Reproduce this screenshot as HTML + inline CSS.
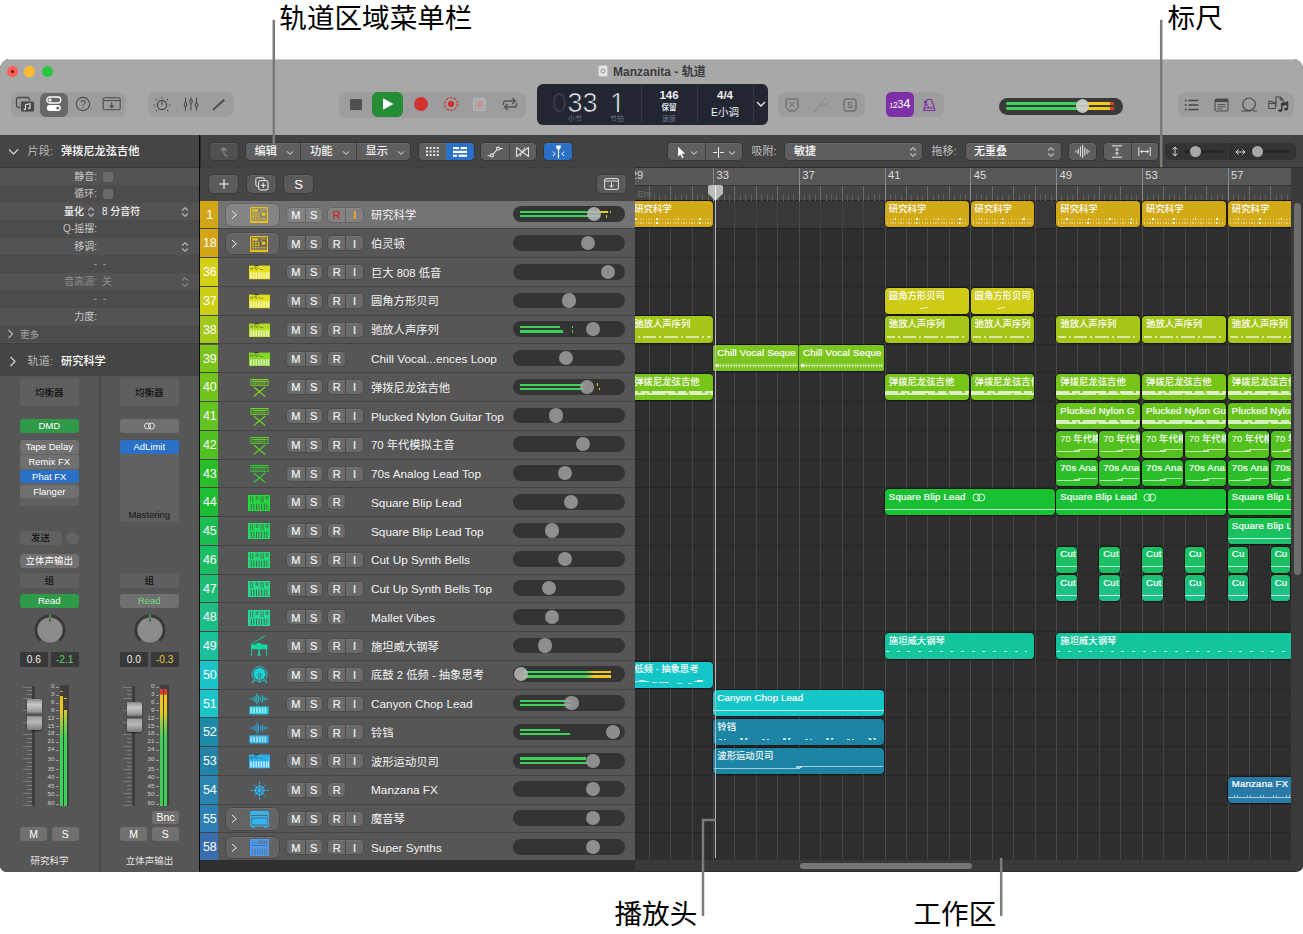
<!DOCTYPE html><html lang="zh-CN"><head><meta charset="utf-8"><title>Manzanita - 轨道</title><style>
*{box-sizing:border-box;margin:0;padding:0}
html,body{width:1303px;height:934px;background:#fff;overflow:hidden}
body{position:relative;font-family:"Liberation Sans","Noto Sans CJK SC",sans-serif;color:#fff;-webkit-font-smoothing:antialiased}
.abs,.abs *{position:absolute}
div,span,svg{position:absolute}
.callout{color:#000;font-size:27.6px;line-height:32px;z-index:60;white-space:nowrap;font-family:"Liberation Sans","Noto Sans CJK SC",sans-serif;font-weight:400}
.cl{background:#7a7a7a;z-index:60}
#win{left:0;top:59px;width:1303px;height:812.5px;border-radius:10px 10px 7px 7px;overflow:hidden;background:#2c2c2c}
#tb{left:0;top:0;width:1303px;height:76px;background:#a8a8a8}
.tl{width:11px;height:11px;border-radius:50%;top:7px}
.grp{background:#9d9d9d;border-radius:7.5px;height:25.8px;top:32.5px}
.t{white-space:nowrap;line-height:1}
.btn{background:#6a6a6a;border-radius:4px;box-shadow:0 0.5px 0 rgba(255,255,255,.12) inset,0 0 0 0.5px rgba(0,0,0,.25)}
.ms{font-size:11px;color:#f4f4f4;text-align:center;line-height:14px;height:14px;top:0;font-weight:400;-webkit-text-stroke:.2px}
.row{left:201px;width:434px;height:28.76px}
.num{left:-0.7px;top:0;width:17.7px;padding-left:1px;height:100%;font-size:12.5px;letter-spacing:-0.2px;text-align:center;color:#fff}
.nm{left:170px;font-size:12px;color:#f4f4f4;white-space:nowrap}
.sl{left:312px;top:5.6px;width:112.2px;height:15.8px;border-radius:8px;background:#343434}
.kn{width:14.2px;height:14.2px;border-radius:50%;background:#8e8e8e;top:0.8px}
.reg{border-radius:4px;overflow:hidden;box-shadow:0 0 0 0.8px rgba(0,0,0,.62)}
.reg .rt{left:4px;top:0.8px;font-size:9.6px;color:#fff;white-space:nowrap;line-height:13px;font-weight:500;letter-spacing:.2px;-webkit-text-stroke:.22px #fff}
.il{font-size:10px;color:#c8c8c8;white-space:nowrap;text-align:right;width:110px;left:0}
</style></head><body>
<svg style="left:0;top:0;z-index:60" width="1303" height="934" viewBox="0 0 1303 934"><g fill="none" stroke="#7b7b7b" stroke-width="2.5"><path d="M273.8 19.800V144"/><path d="M1161.200 19.800V167.300"/><path d="M703 916V820h12.800"/><path d="M1001.200 858V916"/></g></svg>
<div class="callout" style="left:279.3px;top:3px">轨道区域菜单栏</div>
<div class="callout" style="left:1167.6px;top:3px">标尺</div>
<div class="callout" style="left:614.5px;top:899px">播放头</div>
<div class="callout" style="left:913.5px;top:899px">工作区</div>
<div style="left:8px;top:59px;width:1287px;height:1px;background:#cdcdcd;z-index:55"></div>
<div id="win">
<div id="tb">
<div class="tl" style="left:7px;background:#fe5f57"></div><div style="left:11px;top:11px;width:3px;height:3px;border-radius:50%;background:#6b0b07"></div>
<div class="tl" style="left:24px;background:#febc2e"></div>
<div class="tl" style="left:41.5px;background:#28c840"></div>
<div class="t" style="left:613px;top:6.5px;font-size:12px;font-weight:700;color:#3c3c3c">Manzanita - 轨道</div>
<svg style="left:598px;top:6px" width="10" height="12" viewBox="0 0 10 12"><rect x="0.5" y="0.5" width="9" height="11" rx="1.5" fill="#e4e4e4" stroke="#bdbdbd" stroke-width="0.6"/><circle cx="5" cy="6" r="2" fill="none" stroke="#777" stroke-width="0.8"/></svg>
<div class="grp" style="left:11px;width:115px"></div>
<div style="left:40px;top:33.5px;width:28px;height:24px;border-radius:6px;background:#686868"></div>
<svg style="left:15px;top:36.500px" width="22" height="20" viewBox="0 0 22 20"><rect x="1.5" y="1.5" width="13" height="10" rx="2" fill="none" stroke="#4a4a4a" stroke-width="1.3"/><rect x="5.5" y="5" width="14" height="11" rx="2" fill="#4a4a4a" stroke="#a0a0a0" stroke-width="0.8"/><path d="M10.5 13.2v-4.6l4.5-1v4.4" fill="none" stroke="#d8d8d8" stroke-width="1.1"/><ellipse cx="9.7" cy="13.3" rx="1.2" ry="0.9" fill="#d8d8d8"/><ellipse cx="14.2" cy="12.2" rx="1.2" ry="0.9" fill="#d8d8d8"/></svg>
<svg style="left:45px;top:36px" width="18" height="18" viewBox="0 0 18 18"><rect x="1.8" y="2" width="14" height="6" rx="3" fill="none" stroke="#fff" stroke-width="1.3"/><circle cx="5" cy="5" r="1.6" fill="#fff"/><rect x="1.8" y="10" width="14" height="6" rx="3" fill="#fff"/><circle cx="12.8" cy="13" r="1.6" fill="#686868"/></svg>
<svg style="left:75px;top:37px" width="16" height="16" viewBox="0 0 16 16"><circle cx="8" cy="8" r="6.6" fill="none" stroke="#4a4a4a" stroke-width="1.1"/><text x="8" y="11.6" font-size="10" text-anchor="middle" fill="#4a4a4a" font-family="Liberation Sans,sans-serif">?</text></svg>
<svg style="left:102px;top:37px" width="20" height="16" viewBox="0 0 20 16"><rect x="1.2" y="1.8" width="17" height="12" rx="1.8" fill="none" stroke="#4a4a4a" stroke-width="1.1"/><path d="M1.5 4.6h16.5" stroke="#4a4a4a" stroke-width="1"/><path d="M9.7 6.5v5M7.4 9.4l2.3 2.3 2.3-2.3" fill="none" stroke="#4a4a4a" stroke-width="1.1"/></svg>
<div class="grp" style="left:148px;width:86px"></div>
<svg style="left:152px;top:36px" width="20" height="19" viewBox="0 0 20 19"><circle cx="10" cy="10" r="4.6" fill="none" stroke="#4a4a4a" stroke-width="1.2"/><path d="M10 6.5v3.7" stroke="#4a4a4a" stroke-width="1.2"/><g stroke="#4a4a4a" stroke-width="1.2" stroke-linecap="round"><path d="M10 2v0.6M4.3 4.3l.4.4M15.7 4.3l-.4.4M2 10h.6M17.4 10h.6M4.3 15.7l.4-.4M15.7 15.7l-.4-.4"/></g></svg>
<svg style="left:182px;top:37px" width="18" height="16" viewBox="0 0 18 16"><g stroke="#4a4a4a" stroke-width="1.1" fill="none"><path d="M3.5 1.5v5M3.5 10v4.5M9 1.5v2M9 7.5v7M14.5 1.5v6M14.5 11v3.5"/><rect x="2.3" y="6.5" width="2.4" height="3.6" rx="1.2"/><rect x="7.8" y="3.6" width="2.4" height="3.6" rx="1.2"/><rect x="13.3" y="7.4" width="2.4" height="3.6" rx="1.2"/></g></svg>
<svg style="left:211px;top:38px" width="16" height="14" viewBox="0 0 16 14"><path d="M1.5 12.5L12.5 2.2l1.3 1.4L2.8 13z" fill="#4a4a4a" stroke="#4a4a4a" stroke-width="0.6"/></svg>
<div class="grp" style="left:339px;width:187px;top:32.5px;height:26px"></div>
<div style="left:350px;top:39.5px;width:11.5px;height:11.5px;border-radius:1.5px;background:#505050"></div>
<div style="left:372px;top:32.5px;width:31px;height:25px;border-radius:6px;background:#238c34"></div>
<svg style="left:381px;top:38px" width="14" height="14" viewBox="0 0 14 14"><path d="M2 1.2v11.6l10.5-5.8z" fill="#fff"/></svg>
<div style="left:413.5px;top:38px;width:14px;height:14px;border-radius:50%;background:#d13232"></div>
<svg style="left:443px;top:37px" width="16" height="16" viewBox="0 0 16 16"><circle cx="8" cy="8" r="6.4" fill="none" stroke="#d62a2a" stroke-width="1.1" stroke-dasharray="2.6 1.4"/><circle cx="8" cy="8" r="3" fill="#d62a2a"/></svg>
<div style="left:473px;top:39px;width:13px;height:13px;border-radius:2px;border:1px solid #b9b9b9;background:#ababab"></div><div style="left:477px;top:43px;width:5px;height:5px;border-radius:50%;background:#d98585"></div>
<svg style="left:501px;top:37px" width="18" height="16" viewBox="0 0 18 16"><g fill="none" stroke="#555" stroke-width="1.5" stroke-linecap="round" stroke-linejoin="round"><path d="M2.5 8.5V7a2 2 0 0 1 2-2h9.5M11.8 2.5l2.6 2.5-2.6 2.5"/><path d="M15.5 7.5V9a2 2 0 0 1-2 2H4M6.2 8.5L3.6 11l2.6 2.5"/></g></svg>
<div style="left:537px;top:25px;width:231px;height:41px;border-radius:6px;background:#222631"></div>
<div style="left:641px;top:26px;width:1px;height:38px;background:#323746"></div><div style="left:697px;top:26px;width:1px;height:38px;background:#323746"></div><div style="left:753px;top:26px;width:1px;height:38px;background:#323746"></div>
<div class="t" style="left:552px;top:30.5px;font-size:27px;-webkit-text-stroke:0.7px #222631;color:#3c4252">0</div>
<div class="t" style="left:567.5px;top:30.5px;font-size:27px;-webkit-text-stroke:0.7px #222631;color:#eef0f6">33</div>
<div class="t" style="left:610px;top:30.5px;font-size:27px;-webkit-text-stroke:0.7px #222631;color:#eef0f6">1</div>
<div style="left:610.5px;top:50.6px;width:6.5px;height:2.8px;background:#222631"></div><div style="left:619px;top:50.6px;width:6.5px;height:2.8px;background:#222631"></div>
<div class="t" style="left:568px;top:56px;font-size:7px;color:#6a7289">小节</div>
<div class="t" style="left:610px;top:56px;font-size:7px;color:#6a7289">节拍</div>
<div class="t" style="left:641px;width:56px;text-align:center;top:31px;font-size:11.5px;color:#eef0f5;font-weight:700">146</div>
<div class="t" style="left:641px;width:56px;text-align:center;top:45px;font-size:7.5px;color:#dfe2ea;font-weight:700">保留</div>
<div class="t" style="left:641px;width:56px;text-align:center;top:56px;font-size:7px;color:#6a7289">速度</div>
<div class="t" style="left:697px;width:56px;text-align:center;top:31px;font-size:11.5px;color:#eef0f5;font-weight:700">4/4</div>
<div class="t" style="left:697px;width:56px;text-align:center;top:48px;font-size:10.5px;color:#eef0f5">E小调</div>
<svg style="left:755px;top:41px" width="12" height="8" viewBox="0 0 12 8"><path d="M2 2l4 4 4-4" fill="none" stroke="#e8e8e8" stroke-width="1.4"/></svg>
<div class="grp" style="left:778px;width:87px"></div>
<svg style="left:785.300px;top:38.800px" width="14" height="14" viewBox="0 0 14 14"><path d="M2.2 1h9.6a1.2 1.2 0 0 1 1.2 1.2v7.3L9.8 13H4.2L1 9.5V2.2A1.2 1.2 0 0 1 2.2 1z" fill="none" stroke="#5a5a5a" stroke-width="1"/><path d="M4.7 4.2l4.6 4.6M9.3 4.2L4.7 8.8" stroke="#5a5a5a" stroke-width="1"/></svg>
<svg style="left:813px;top:37.500px" width="16" height="16" viewBox="0 0 16 16"><path d="M1.800 14.500L12.300 1M6.800 8c1.800 1.800 5 .8 7.500-2.200" fill="none" stroke="#8c8c8c" stroke-width="1.100" stroke-linecap="round"/><circle cx="1.800" cy="14.500" r=".9" fill="#8c8c8c"/></svg>
<svg style="left:842.700px;top:38.700px" width="14" height="14" viewBox="0 0 14 14"><rect x="1" y="1" width="12" height="12" rx="2" fill="none" stroke="#5a5a5a" stroke-width="1"/><text x="7" y="10.200" font-size="8.500" text-anchor="middle" fill="#5a5a5a" font-family="Liberation Sans,sans-serif">S</text></svg>
<div class="grp" style="left:886px;width:58px"></div>
<div style="left:886px;top:32.5px;width:28px;height:25.800px;border-radius:5.5px;background:#7f2fa8"></div>
<div class="t" style="left:889.5px;top:43.500px;font-size:6.500px;color:#fff">1</div><div class="t" style="left:893px;top:42px;font-size:8.500px;color:#fff">2</div><div class="t" style="left:897.500px;top:40.300px;font-size:10.500px;color:#fff">3</div><div class="t" style="left:903.300px;top:38.300px;font-size:13px;color:#fff">4</div>
<svg style="left:921.300px;top:37.800px" width="17" height="16" viewBox="0 0 17 16"><path d="M6 2.5h4.5L14 13.500H2.500z" fill="none" stroke="#7f2fa8" stroke-width="1.2" stroke-linejoin="round"/><path d="M3.200 11h10" stroke="#7f2fa8" stroke-width="1.1"/><path d="M8.200 11L3 3.800" stroke="#7f2fa8" stroke-width="1.1"/><circle cx="4.200" cy="5.300" r="1.300" fill="#7f2fa8"/></svg>
<div style="left:998.5px;top:38.6px;width:124px;height:17.2px;border-radius:8.6px;background:#393939"></div>
<div style="left:1006px;top:43.2px;width:76px;height:2.8px;border-radius:1.4px 0 0 1.4px;background:#3fd35c"></div><div style="left:1006px;top:48.4px;width:76px;height:2.8px;border-radius:1.4px 0 0 1.4px;background:#3fd35c"></div>
<div style="left:1082px;top:43.2px;width:28px;height:2.8px;background:#f5cc14"></div><div style="left:1082px;top:48.4px;width:28px;height:2.8px;background:#f5cc14"></div>
<div style="left:1110px;top:43.2px;width:3.6px;height:2.8px;background:#e0402b"></div><div style="left:1110px;top:48.4px;width:3.6px;height:2.8px;background:#e0402b"></div>
<div style="left:1075.8px;top:40.4px;width:13.4px;height:13.4px;border-radius:50%;background:rgba(205,205,205,.93);box-shadow:0 0 1px rgba(0,0,0,.4)"></div>
<div class="grp" style="left:1178px;width:116px"></div>
<svg style="left:1184px;top:38.7px" width="16" height="14" viewBox="0 0 16 14"><g stroke="#4a4a4a" stroke-width="1.300"><path d="M4.500 2.500h10M4.500 7h10M4.500 11.500h10"/></g><g fill="#4a4a4a"><circle cx="1.700" cy="2.500" r="1"/><circle cx="1.700" cy="7" r="1"/><circle cx="1.700" cy="11.500" r="1"/></g></svg>
<svg style="left:1214px;top:38.7px" width="15" height="14" viewBox="0 0 15 14"><rect x="1" y="1" width="13" height="12" rx="1.800" fill="none" stroke="#4a4a4a" stroke-width="1.100"/><rect x="1" y="1" width="13" height="3" fill="#4a4a4a"/><path d="M3.500 6.500h8M3.500 8.700h8M3.500 10.900h5" stroke="#4a4a4a" stroke-width="0.900"/></svg>
<svg style="left:1240px;top:37.5px" width="18" height="17" viewBox="0 0 18 17"><circle cx="9" cy="7.300" r="6.300" fill="none" stroke="#4a4a4a" stroke-width="1.200"/><path d="M1.500 14h9.500M12.800 14h4" fill="none" stroke="#4a4a4a" stroke-width="1.100"/></svg>
<svg style="left:1267px;top:36px" width="24" height="20" viewBox="0 0 24 20"><g fill="none" stroke="#4a4a4a" stroke-width="1.1" stroke-linejoin="round"><path d="M1.800 6.200h2.600l.8 1h3.200v6.300H1.800z"/><path d="M1.800 8.500h6.600"/><path d="M9 11V2h4.200l3 3v2.500"/><path d="M13.200 2v3h3"/></g><path d="M14.700 15.500v-6.800l5.800-1.400v6.800" fill="none" stroke="#3a3a3a" stroke-width="1.500"/><path d="M14.700 10.200l5.800-1.400" stroke="#3a3a3a" stroke-width="1.800"/><ellipse cx="13.200" cy="15.600" rx="1.900" ry="1.400" fill="#3a3a3a"/><ellipse cx="19" cy="14.200" rx="1.900" ry="1.400" fill="#3a3a3a"/></svg>
</div><div id="insp" style="left:0;top:76px;width:199px;height:736.5px;background:#565656">
<div style="left:0;top:0;width:199px;height:32.700px;background:#454545;border-bottom:1px solid #383838"></div>
<svg style="left:8px;top:12.800px" width="11" height="8" viewBox="0 0 11 8"><path d="M1 1.500l4.500 4.500L10 1.500" fill="none" stroke="#d0d0d0" stroke-width="1.300"/></svg>
<div class="t" style="left:27.500px;top:11.300px;font-size:11.200px;color:#b8b8b8">片段:</div>
<div class="t" style="left:61px;top:11.300px;font-size:11.200px;color:#fff;font-weight:500">弹拨尼龙弦吉他</div>
<div style="left:0;top:33.00px;width:199px;height:17.45px;background:#535353"></div>
<div style="left:0;top:50.45px;width:199px;height:17.45px;background:#4c4c4c"></div>
<div style="left:0;top:67.90px;width:199px;height:17.45px;background:#535353"></div>
<div style="left:0;top:85.35px;width:199px;height:17.45px;background:#4c4c4c"></div>
<div style="left:0;top:102.80px;width:199px;height:17.45px;background:#535353"></div>
<div style="left:0;top:120.25px;width:199px;height:17.45px;background:#4c4c4c"></div>
<div style="left:0;top:137.70px;width:199px;height:17.45px;background:#535353"></div>
<div style="left:0;top:155.15px;width:199px;height:17.45px;background:#4c4c4c"></div>
<div style="left:0;top:172.60px;width:199px;height:17.45px;background:#535353"></div>
<div style="left:0;top:190.05px;width:199px;height:17.45px;background:#4c4c4c"></div>
<div class="t" style="left:0;width:97px;text-align:right;top:37.00px;font-size:10px;color:#c6c6c6;">静音:</div>
<div class="t" style="left:0;width:97px;text-align:right;top:54.45px;font-size:10px;color:#c6c6c6;">循环:</div>
<div class="t" style="left:64px;top:71.90px;font-size:10px;color:#f0f0f0;font-weight:500">量化</div>
<div class="t" style="left:0;width:97px;text-align:right;top:89.35px;font-size:10px;color:#c6c6c6;">Q-摇摆:</div>
<div class="t" style="left:0;width:97px;text-align:right;top:106.80px;font-size:10px;color:#c6c6c6;">移调:</div>
<div class="t" style="left:0;width:106px;text-align:right;top:124.25px;font-size:10px;color:#a4a4a4;">-&nbsp; -</div>
<div class="t" style="left:0;width:97px;text-align:right;top:141.70px;font-size:10px;color:#8e8e8e;">音高源:</div>
<div class="t" style="left:0;width:106px;text-align:right;top:159.15px;font-size:10px;color:#a4a4a4;">-&nbsp; -</div>
<div class="t" style="left:0;width:97px;text-align:right;top:176.60px;font-size:10px;color:#c6c6c6;">力度:</div>
<div class="t" style="left:102px;top:71.90px;font-size:10px;color:#f0f0f0;font-weight:500">8 分音符</div>
<div class="t" style="left:102px;top:141.70px;font-size:10px;color:#8e8e8e">关</div>
<div style="left:103px;top:36.50px;width:10px;height:10px;border-radius:2px;background:#6b6b6b"></div>
<div style="left:103px;top:53.95px;width:10px;height:10px;border-radius:2px;background:#6b6b6b"></div>
<svg style="left:87.0px;top:70.9px" width="8" height="12" viewBox="0 0 8 12"><path d="M1.200 4.500L4 1.700l2.800 2.800M1.200 7.500L4 10.300l2.800-2.800" fill="none" stroke="#c0c0c0" stroke-width="1.100"/></svg>
<svg style="left:181.0px;top:70.9px" width="8" height="12" viewBox="0 0 8 12"><path d="M1.200 4.500L4 1.700l2.800 2.800M1.200 7.500L4 10.300l2.800-2.800" fill="none" stroke="#c0c0c0" stroke-width="1.100"/></svg>
<svg style="left:181.0px;top:105.8px" width="8" height="12" viewBox="0 0 8 12"><path d="M1.200 4.500L4 1.700l2.800 2.800M1.200 7.500L4 10.300l2.800-2.800" fill="none" stroke="#c0c0c0" stroke-width="1.100"/></svg>
<svg style="left:181.0px;top:140.7px" width="8" height="12" viewBox="0 0 8 12"><path d="M1.200 4.500L4 1.700l2.800 2.800M1.200 7.500L4 10.300l2.800-2.800" fill="none" stroke="#8a8a8a" stroke-width="1.100"/></svg>
<svg style="left:7px;top:194.0px" width="7" height="10" viewBox="0 0 7 10"><path d="M1.500 1l4 4-4 4" fill="none" stroke="#b8b8b8" stroke-width="1.100"/></svg>
<div class="t" style="left:20px;top:194.55px;font-size:9.5px;color:#a8a8a8">更多</div>
<div style="left:0;top:207.500px;width:199px;height:34px;background:#454545;border-top:1px solid #3c3c3c;border-bottom:1px solid #333"></div>
<svg style="left:9px;top:220.500px" width="8" height="11" viewBox="0 0 8 11"><path d="M1.500 1l4.500 4.500L1.500 10" fill="none" stroke="#d0d0d0" stroke-width="1.300"/></svg>
<div class="t" style="left:27.500px;top:221px;font-size:11.200px;color:#b8b8b8">轨道:</div>
<div class="t" style="left:61px;top:221px;font-size:11.200px;color:#fff;font-weight:500">研究科学</div>
<div style="left:0;top:241px;width:199px;height:495px;background:#565656"></div>
<div style="left:99px;top:241px;width:1.500px;height:495px;background:#484848"></div>
<div style="left:19.5px;top:244.0px;width:59.5px;height:27.0px;background:#5f5f5f;border-radius:3px;font-size:9.5px;color:#121212;text-align:center;line-height:27.0px;white-space:nowrap;border-radius:1px;font-weight:500;">均衡器</div>
<div style="left:19.5px;top:438.0px;width:59.5px;height:15.0px;background:#5f5f5f;border-radius:3px;font-size:9.5px;color:#121212;text-align:center;line-height:15.0px;white-space:nowrap;border-radius:1px;font-weight:500;">组</div>
<div style="left:119.5px;top:244.0px;width:59.5px;height:27.0px;background:#5f5f5f;border-radius:3px;font-size:9.5px;color:#121212;text-align:center;line-height:27.0px;white-space:nowrap;border-radius:1px;font-weight:500;">均衡器</div>
<div style="left:119.5px;top:438.0px;width:59.5px;height:15.0px;background:#5f5f5f;border-radius:3px;font-size:9.5px;color:#121212;text-align:center;line-height:15.0px;white-space:nowrap;border-radius:1px;font-weight:500;">组</div>
<div style="left:19.5px;top:283.5px;width:59.5px;height:14.0px;background:#2e9a47;border-radius:3px;font-size:9.5px;color:#fff;text-align:center;line-height:14.0px;white-space:nowrap;">DMD</div>
<div style="left:119.5px;top:283.5px;width:59.5px;height:14.0px;background:#707070;border-radius:3px;font-size:9.5px;color:#fff;text-align:center;line-height:14.0px;white-space:nowrap;"></div>
<svg style="left:143px;top:286.5px" width="13" height="8" viewBox="0 0 13 8"><circle cx="4.500" cy="4" r="3" fill="none" stroke="#f0f0f0" stroke-width="0.900"/><circle cx="8.500" cy="4" r="3" fill="none" stroke="#f0f0f0" stroke-width="0.900"/></svg>
<div style="left:19.500px;top:305.0px;width:59.500px;height:66px;background:#616161;border-radius:3px"></div>
<div style="left:119.500px;top:305.0px;width:59.500px;height:82px;background:#616161;border-radius:3px"></div>
<div style="left:19.5px;top:305.3px;width:59.5px;height:13.6px;background:#707070;border-radius:3px;font-size:9.5px;color:#fff;text-align:center;line-height:13.6px;white-space:nowrap;">Tape Delay</div>
<div style="left:19.5px;top:320.0px;width:59.5px;height:13.6px;background:#707070;border-radius:3px;font-size:9.5px;color:#fff;text-align:center;line-height:13.6px;white-space:nowrap;">Remix FX</div>
<div style="left:19.5px;top:334.8px;width:59.5px;height:13.6px;background:#2a70c6;border-radius:3px;font-size:9.5px;color:#fff;text-align:center;line-height:13.6px;white-space:nowrap;">Phat FX</div>
<div style="left:19.5px;top:349.6px;width:59.5px;height:13.6px;background:#707070;border-radius:3px;font-size:9.5px;color:#fff;text-align:center;line-height:13.6px;white-space:nowrap;">Flanger</div>
<div style="left:119.5px;top:305.3px;width:59.5px;height:13.6px;background:#2a70c6;border-radius:3px;font-size:9.5px;color:#fff;text-align:center;line-height:13.6px;white-space:nowrap;">AdLimit</div>
<div class="t" style="left:119.500px;width:59.500px;text-align:center;top:375.0px;font-size:9.500px;color:#161616">Mastering</div>
<div style="left:19.5px;top:396.0px;width:42.0px;height:14.0px;background:#616161;border-radius:3px;font-size:9.5px;color:#121212;text-align:center;line-height:14.0px;white-space:nowrap;font-weight:500;">发送</div>
<div style="left:65.500px;top:396.5px;width:13px;height:13px;border-radius:50%;background:#636363"></div>
<div style="left:19.5px;top:418.7px;width:59.5px;height:14.0px;background:#707070;border-radius:3px;font-size:9.5px;color:#fff;text-align:center;line-height:14.0px;white-space:nowrap;">立体声输出</div>
<div style="left:19.5px;top:458.6px;width:59.5px;height:14.0px;background:#2e9a47;border-radius:3px;font-size:9.5px;color:#fff;text-align:center;line-height:14.0px;white-space:nowrap;">Read</div>
<div style="left:119.5px;top:458.6px;width:59.5px;height:14.0px;background:#707070;border-radius:3px;font-size:9.5px;color:#6fdc7f;text-align:center;line-height:14.0px;white-space:nowrap;">Read</div>
<svg style="left:32.5px;top:478.0px" width="34" height="34" viewBox="-17 -17 34 34"><path d="M-10.300 11.400A15.400 15.400 0 1 1 10.300 11.400L8.300 9.200A12.400 12.400 0 1 0 -8.300 9.200z" fill="#373737"/><circle r="12.600" fill="#8c8c8c"/><path d="M0-15.500v3.500" stroke="#3fc84f" stroke-width="1.200"/><path d="M0-11.500v3" stroke="#2a2a2a" stroke-width="1"/></svg>
<svg style="left:132.5px;top:478.0px" width="34" height="34" viewBox="-17 -17 34 34"><path d="M-10.300 11.400A15.400 15.400 0 1 1 10.300 11.400L8.300 9.200A12.400 12.400 0 1 0 -8.300 9.200z" fill="#373737"/><circle r="12.600" fill="#8c8c8c"/><path d="M0-15.500v3.500" stroke="#3fc84f" stroke-width="1.200"/><path d="M0-11.500v3" stroke="#2a2a2a" stroke-width="1"/></svg>
<div style="left:19.5px;top:517.2px;width:28.500px;height:15.200px;background:#383838;border-radius:1px;font-size:10.200px;color:#f0f0f0;text-align:center;line-height:15.500px">0.6</div>
<div style="left:50.5px;top:517.2px;width:28.500px;height:15.200px;background:#383838;border-radius:1px;font-size:10.200px;color:#5fd068;text-align:center;line-height:15.500px">-2.1</div>
<div style="left:119.5px;top:517.2px;width:28.500px;height:15.200px;background:#383838;border-radius:1px;font-size:10.200px;color:#f0f0f0;text-align:center;line-height:15.500px">0.0</div>
<div style="left:150.5px;top:517.2px;width:28.500px;height:15.200px;background:#383838;border-radius:1px;font-size:10.200px;color:#e8c43a;text-align:center;line-height:15.500px">-0.3</div>
<div style="left:32.0px;top:551.0px;width:3px;height:119.500px;background:#3c3c3c;border-radius:1px"></div>
<div style="left:23.0px;top:551.50px;width:9px;height:0.800px;background:#7c7c7c"></div>
<div style="left:27.0px;top:555.45px;width:5px;height:0.800px;background:#7c7c7c"></div>
<div style="left:27.0px;top:559.40px;width:5px;height:0.800px;background:#7c7c7c"></div>
<div style="left:23.0px;top:563.35px;width:9px;height:0.800px;background:#7c7c7c"></div>
<div style="left:27.0px;top:567.30px;width:5px;height:0.800px;background:#7c7c7c"></div>
<div style="left:27.0px;top:571.25px;width:5px;height:0.800px;background:#7c7c7c"></div>
<div style="left:23.0px;top:575.20px;width:9px;height:0.800px;background:#7c7c7c"></div>
<div style="left:27.0px;top:579.15px;width:5px;height:0.800px;background:#7c7c7c"></div>
<div style="left:27.0px;top:583.10px;width:5px;height:0.800px;background:#7c7c7c"></div>
<div style="left:23.0px;top:587.05px;width:9px;height:0.800px;background:#7c7c7c"></div>
<div style="left:27.0px;top:591.00px;width:5px;height:0.800px;background:#7c7c7c"></div>
<div style="left:27.0px;top:594.95px;width:5px;height:0.800px;background:#7c7c7c"></div>
<div style="left:23.0px;top:598.90px;width:9px;height:0.800px;background:#7c7c7c"></div>
<div style="left:27.0px;top:602.85px;width:5px;height:0.800px;background:#7c7c7c"></div>
<div style="left:27.0px;top:606.80px;width:5px;height:0.800px;background:#7c7c7c"></div>
<div style="left:23.0px;top:610.75px;width:9px;height:0.800px;background:#7c7c7c"></div>
<div style="left:27.0px;top:614.70px;width:5px;height:0.800px;background:#7c7c7c"></div>
<div style="left:27.0px;top:618.65px;width:5px;height:0.800px;background:#7c7c7c"></div>
<div style="left:23.0px;top:622.60px;width:9px;height:0.800px;background:#7c7c7c"></div>
<div style="left:27.0px;top:626.55px;width:5px;height:0.800px;background:#7c7c7c"></div>
<div style="left:27.0px;top:630.50px;width:5px;height:0.800px;background:#7c7c7c"></div>
<div style="left:23.0px;top:634.45px;width:9px;height:0.800px;background:#7c7c7c"></div>
<div style="left:27.0px;top:638.40px;width:5px;height:0.800px;background:#7c7c7c"></div>
<div style="left:27.0px;top:642.35px;width:5px;height:0.800px;background:#7c7c7c"></div>
<div style="left:23.0px;top:646.30px;width:9px;height:0.800px;background:#7c7c7c"></div>
<div style="left:27.0px;top:650.25px;width:5px;height:0.800px;background:#7c7c7c"></div>
<div style="left:27.0px;top:654.20px;width:5px;height:0.800px;background:#7c7c7c"></div>
<div style="left:23.0px;top:658.15px;width:9px;height:0.800px;background:#7c7c7c"></div>
<div style="left:27.0px;top:662.10px;width:5px;height:0.800px;background:#7c7c7c"></div>
<div style="left:27.0px;top:666.05px;width:5px;height:0.800px;background:#7c7c7c"></div>
<div style="left:23.0px;top:670.00px;width:9px;height:0.800px;background:#7c7c7c"></div>
<div class="t" style="left:40.5px;width:14px;text-align:right;top:548.4px;font-size:6.200px;color:#cfcfcf">0</div>
<div style="left:56.0px;top:551.5px;width:2.500px;height:0.700px;background:#9a9a9a"></div>
<div class="t" style="left:40.5px;width:14px;text-align:right;top:556.4px;font-size:6.200px;color:#cfcfcf">3</div>
<div style="left:56.0px;top:559.5px;width:2.500px;height:0.700px;background:#9a9a9a"></div>
<div class="t" style="left:40.5px;width:14px;text-align:right;top:564.4px;font-size:6.200px;color:#cfcfcf">6</div>
<div style="left:56.0px;top:567.5px;width:2.500px;height:0.700px;background:#9a9a9a"></div>
<div class="t" style="left:40.5px;width:14px;text-align:right;top:571.9px;font-size:6.200px;color:#cfcfcf">9</div>
<div style="left:56.0px;top:575.0px;width:2.500px;height:0.700px;background:#9a9a9a"></div>
<div class="t" style="left:40.5px;width:14px;text-align:right;top:579.9px;font-size:6.200px;color:#cfcfcf">12</div>
<div style="left:56.0px;top:583.0px;width:2.500px;height:0.700px;background:#9a9a9a"></div>
<div class="t" style="left:40.5px;width:14px;text-align:right;top:587.9px;font-size:6.200px;color:#cfcfcf">15</div>
<div style="left:56.0px;top:591.0px;width:2.500px;height:0.700px;background:#9a9a9a"></div>
<div class="t" style="left:40.5px;width:14px;text-align:right;top:595.4px;font-size:6.200px;color:#cfcfcf">18</div>
<div style="left:56.0px;top:598.5px;width:2.500px;height:0.700px;background:#9a9a9a"></div>
<div class="t" style="left:40.5px;width:14px;text-align:right;top:603.4px;font-size:6.200px;color:#cfcfcf">21</div>
<div style="left:56.0px;top:606.5px;width:2.500px;height:0.700px;background:#9a9a9a"></div>
<div class="t" style="left:40.5px;width:14px;text-align:right;top:611.4px;font-size:6.200px;color:#cfcfcf">24</div>
<div style="left:56.0px;top:614.5px;width:2.500px;height:0.700px;background:#9a9a9a"></div>
<div class="t" style="left:40.5px;width:14px;text-align:right;top:621.4px;font-size:6.200px;color:#cfcfcf">30</div>
<div style="left:56.0px;top:624.5px;width:2.500px;height:0.700px;background:#9a9a9a"></div>
<div class="t" style="left:40.5px;width:14px;text-align:right;top:630.9px;font-size:6.200px;color:#cfcfcf">35</div>
<div style="left:56.0px;top:634.0px;width:2.500px;height:0.700px;background:#9a9a9a"></div>
<div class="t" style="left:40.5px;width:14px;text-align:right;top:638.9px;font-size:6.200px;color:#cfcfcf">40</div>
<div style="left:56.0px;top:642.0px;width:2.500px;height:0.700px;background:#9a9a9a"></div>
<div class="t" style="left:40.5px;width:14px;text-align:right;top:647.9px;font-size:6.200px;color:#cfcfcf">45</div>
<div style="left:56.0px;top:651.0px;width:2.500px;height:0.700px;background:#9a9a9a"></div>
<div class="t" style="left:40.5px;width:14px;text-align:right;top:656.4px;font-size:6.200px;color:#cfcfcf">50</div>
<div style="left:56.0px;top:659.5px;width:2.500px;height:0.700px;background:#9a9a9a"></div>
<div class="t" style="left:40.5px;width:14px;text-align:right;top:665.4px;font-size:6.200px;color:#cfcfcf">60</div>
<div style="left:56.0px;top:668.5px;width:2.500px;height:0.700px;background:#9a9a9a"></div>
<div style="left:59.5px;top:550.0px;width:9.800px;height:121px;background:#3e3e3e;border-radius:1px"></div>
<div style="left:132.0px;top:551.0px;width:3px;height:119.500px;background:#3c3c3c;border-radius:1px"></div>
<div style="left:123.0px;top:551.50px;width:9px;height:0.800px;background:#7c7c7c"></div>
<div style="left:127.0px;top:555.45px;width:5px;height:0.800px;background:#7c7c7c"></div>
<div style="left:127.0px;top:559.40px;width:5px;height:0.800px;background:#7c7c7c"></div>
<div style="left:123.0px;top:563.35px;width:9px;height:0.800px;background:#7c7c7c"></div>
<div style="left:127.0px;top:567.30px;width:5px;height:0.800px;background:#7c7c7c"></div>
<div style="left:127.0px;top:571.25px;width:5px;height:0.800px;background:#7c7c7c"></div>
<div style="left:123.0px;top:575.20px;width:9px;height:0.800px;background:#7c7c7c"></div>
<div style="left:127.0px;top:579.15px;width:5px;height:0.800px;background:#7c7c7c"></div>
<div style="left:127.0px;top:583.10px;width:5px;height:0.800px;background:#7c7c7c"></div>
<div style="left:123.0px;top:587.05px;width:9px;height:0.800px;background:#7c7c7c"></div>
<div style="left:127.0px;top:591.00px;width:5px;height:0.800px;background:#7c7c7c"></div>
<div style="left:127.0px;top:594.95px;width:5px;height:0.800px;background:#7c7c7c"></div>
<div style="left:123.0px;top:598.90px;width:9px;height:0.800px;background:#7c7c7c"></div>
<div style="left:127.0px;top:602.85px;width:5px;height:0.800px;background:#7c7c7c"></div>
<div style="left:127.0px;top:606.80px;width:5px;height:0.800px;background:#7c7c7c"></div>
<div style="left:123.0px;top:610.75px;width:9px;height:0.800px;background:#7c7c7c"></div>
<div style="left:127.0px;top:614.70px;width:5px;height:0.800px;background:#7c7c7c"></div>
<div style="left:127.0px;top:618.65px;width:5px;height:0.800px;background:#7c7c7c"></div>
<div style="left:123.0px;top:622.60px;width:9px;height:0.800px;background:#7c7c7c"></div>
<div style="left:127.0px;top:626.55px;width:5px;height:0.800px;background:#7c7c7c"></div>
<div style="left:127.0px;top:630.50px;width:5px;height:0.800px;background:#7c7c7c"></div>
<div style="left:123.0px;top:634.45px;width:9px;height:0.800px;background:#7c7c7c"></div>
<div style="left:127.0px;top:638.40px;width:5px;height:0.800px;background:#7c7c7c"></div>
<div style="left:127.0px;top:642.35px;width:5px;height:0.800px;background:#7c7c7c"></div>
<div style="left:123.0px;top:646.30px;width:9px;height:0.800px;background:#7c7c7c"></div>
<div style="left:127.0px;top:650.25px;width:5px;height:0.800px;background:#7c7c7c"></div>
<div style="left:127.0px;top:654.20px;width:5px;height:0.800px;background:#7c7c7c"></div>
<div style="left:123.0px;top:658.15px;width:9px;height:0.800px;background:#7c7c7c"></div>
<div style="left:127.0px;top:662.10px;width:5px;height:0.800px;background:#7c7c7c"></div>
<div style="left:127.0px;top:666.05px;width:5px;height:0.800px;background:#7c7c7c"></div>
<div style="left:123.0px;top:670.00px;width:9px;height:0.800px;background:#7c7c7c"></div>
<div class="t" style="left:140.5px;width:14px;text-align:right;top:548.4px;font-size:6.200px;color:#cfcfcf">0</div>
<div style="left:156.0px;top:551.5px;width:2.500px;height:0.700px;background:#9a9a9a"></div>
<div class="t" style="left:140.5px;width:14px;text-align:right;top:556.4px;font-size:6.200px;color:#cfcfcf">3</div>
<div style="left:156.0px;top:559.5px;width:2.500px;height:0.700px;background:#9a9a9a"></div>
<div class="t" style="left:140.5px;width:14px;text-align:right;top:564.4px;font-size:6.200px;color:#cfcfcf">6</div>
<div style="left:156.0px;top:567.5px;width:2.500px;height:0.700px;background:#9a9a9a"></div>
<div class="t" style="left:140.5px;width:14px;text-align:right;top:571.9px;font-size:6.200px;color:#cfcfcf">9</div>
<div style="left:156.0px;top:575.0px;width:2.500px;height:0.700px;background:#9a9a9a"></div>
<div class="t" style="left:140.5px;width:14px;text-align:right;top:579.9px;font-size:6.200px;color:#cfcfcf">12</div>
<div style="left:156.0px;top:583.0px;width:2.500px;height:0.700px;background:#9a9a9a"></div>
<div class="t" style="left:140.5px;width:14px;text-align:right;top:587.9px;font-size:6.200px;color:#cfcfcf">15</div>
<div style="left:156.0px;top:591.0px;width:2.500px;height:0.700px;background:#9a9a9a"></div>
<div class="t" style="left:140.5px;width:14px;text-align:right;top:595.4px;font-size:6.200px;color:#cfcfcf">18</div>
<div style="left:156.0px;top:598.5px;width:2.500px;height:0.700px;background:#9a9a9a"></div>
<div class="t" style="left:140.5px;width:14px;text-align:right;top:603.4px;font-size:6.200px;color:#cfcfcf">21</div>
<div style="left:156.0px;top:606.5px;width:2.500px;height:0.700px;background:#9a9a9a"></div>
<div class="t" style="left:140.5px;width:14px;text-align:right;top:611.4px;font-size:6.200px;color:#cfcfcf">24</div>
<div style="left:156.0px;top:614.5px;width:2.500px;height:0.700px;background:#9a9a9a"></div>
<div class="t" style="left:140.5px;width:14px;text-align:right;top:621.4px;font-size:6.200px;color:#cfcfcf">30</div>
<div style="left:156.0px;top:624.5px;width:2.500px;height:0.700px;background:#9a9a9a"></div>
<div class="t" style="left:140.5px;width:14px;text-align:right;top:630.9px;font-size:6.200px;color:#cfcfcf">35</div>
<div style="left:156.0px;top:634.0px;width:2.500px;height:0.700px;background:#9a9a9a"></div>
<div class="t" style="left:140.5px;width:14px;text-align:right;top:638.9px;font-size:6.200px;color:#cfcfcf">40</div>
<div style="left:156.0px;top:642.0px;width:2.500px;height:0.700px;background:#9a9a9a"></div>
<div class="t" style="left:140.5px;width:14px;text-align:right;top:647.9px;font-size:6.200px;color:#cfcfcf">45</div>
<div style="left:156.0px;top:651.0px;width:2.500px;height:0.700px;background:#9a9a9a"></div>
<div class="t" style="left:140.5px;width:14px;text-align:right;top:656.4px;font-size:6.200px;color:#cfcfcf">50</div>
<div style="left:156.0px;top:659.5px;width:2.500px;height:0.700px;background:#9a9a9a"></div>
<div class="t" style="left:140.5px;width:14px;text-align:right;top:665.4px;font-size:6.200px;color:#cfcfcf">60</div>
<div style="left:156.0px;top:668.5px;width:2.500px;height:0.700px;background:#9a9a9a"></div>
<div style="left:159.5px;top:550.0px;width:9.800px;height:121px;background:#3e3e3e;border-radius:1px"></div>
<div style="left:26.5px;top:563.5px;width:15px;height:31.0px;border-radius:2px;background:linear-gradient(#8a8a8a,#c8c8c8 18%,#9a9a9a 40%,#5a5a5a 49%,#3a3a3a 51%,#a0a0a0 58%,#b8b8b8 75%,#7a7a7a);box-shadow:0 1px 2px rgba(0,0,0,.5)"></div>
<div style="left:127.0px;top:567.0px;width:15px;height:30.0px;border-radius:2px;background:linear-gradient(#8a8a8a,#c8c8c8 18%,#9a9a9a 40%,#5a5a5a 49%,#3a3a3a 51%,#a0a0a0 58%,#b8b8b8 75%,#7a7a7a);box-shadow:0 1px 2px rgba(0,0,0,.5)"></div>
<div style="left:60.300px;top:560.5px;width:3.200px;height:110px;background:linear-gradient(#f0c020,#e8c820 14%,#8ad040 26%,#3fd05a 40%,#3fd05a)"></div>
<div style="left:64.300px;top:574.5px;width:3.200px;height:96px;background:linear-gradient(#d8c828,#7ad048 14%,#3fd05a 30%,#3fd05a)"></div>
<div style="left:60.300px;top:556.0px;width:3.200px;height:1px;background:#e8a020"></div>
<div style="left:64.300px;top:563.0px;width:3.200px;height:1px;background:#e8c020"></div>
<div style="left:160.3px;top:553.5px;width:3.200px;height:117px;background:linear-gradient(#e03c2c,#e03c2c 4.500%,#f0c020 5%,#e8c820 20%,#8ad040 30%,#3fd05a 42%,#3fd05a)"></div>
<div style="left:164.3px;top:553.5px;width:3.200px;height:117px;background:linear-gradient(#e03c2c,#e03c2c 4.500%,#f0c020 5%,#e8c820 20%,#8ad040 30%,#3fd05a 42%,#3fd05a)"></div>
<div style="left:152.0px;top:675.6px;width:27.0px;height:13.5px;background:#707070;border-radius:3px;font-size:10.5px;color:#fff;text-align:center;line-height:13.5px;white-space:nowrap;">Bnc</div>
<div style="left:20.0px;top:692.4px;width:27.0px;height:14.0px;background:#707070;border-radius:3px;font-size:10.5px;color:#fff;text-align:center;line-height:14.0px;white-space:nowrap;">M</div>
<div style="left:51.8px;top:692.4px;width:27.0px;height:14.0px;background:#707070;border-radius:3px;font-size:10.5px;color:#fff;text-align:center;line-height:14.0px;white-space:nowrap;">S</div>
<div style="left:120.0px;top:692.4px;width:27.0px;height:14.0px;background:#707070;border-radius:3px;font-size:10.5px;color:#fff;text-align:center;line-height:14.0px;white-space:nowrap;">M</div>
<div style="left:151.8px;top:692.4px;width:27.0px;height:14.0px;background:#707070;border-radius:3px;font-size:10.5px;color:#fff;text-align:center;line-height:14.0px;white-space:nowrap;">S</div>
<div class="t" style="left:0;width:99px;text-align:center;top:720.5px;font-size:9.500px;color:#e4e4e4">研究科学</div>
<div class="t" style="left:100px;width:99px;text-align:center;top:720.5px;font-size:9.500px;color:#e4e4e4">立体声输出</div>
</div>
<div style="left:199px;top:76px;width:1.3px;height:736px;background:#0c0c0c"></div><svg width="0" height="0" style="left:0;top:0"><defs>
<symbol id="i-dm" viewBox="0 0 18 16"><path fill="currentColor" fill-rule="evenodd" d="M1.500 0h15A1.500 1.500 0 0 1 18 1.500V16H0V1.500A1.500 1.500 0 0 1 1.500 0zM1.200 1.200v12.600h15.600V1.200zM2.200 2.200h6v2.600h-6zM2.200 5.800h1.800v1.600H2.200zM4.900 5.800h1.800v1.600H4.900zM7.600 5.800h1.800v1.600H7.600zM2.200 8.300h1.800v1.600H2.200zM4.900 8.300h1.800v1.600H4.900zM7.600 8.300h1.800v1.600H7.600zM2.200 10.800h1.800v1.600H2.200zM4.900 10.800h1.800v1.600H4.900zM7.600 10.800h1.800v1.600H7.600zM10.500 2.200h1.200v1.200h-1.200zM12.500 2.200h1.200v1.200h-1.200zM14.500 2.200h1.200v1.200h-1.200zM10.500 4.200h1.200v1.200h-1.200zM10.500 10.800h1.200v1.600h-1.200zM12.500 10.800h1.200v1.600h-1.200zM14.500 10.800h1.200v1.600h-1.200z"/><circle cx="13.600" cy="7.200" r="1.900" fill="currentColor"/></symbol>
<symbol id="i-sy" viewBox="0 0 21 14.500"><rect x="0" y=".6" width="21" height="13.900" fill="currentColor"/><rect x="5.500" y="0" width="4" height="1.200" fill="#3a3a3a"/><g fill="#4a4a4a" fill-opacity=".75"><rect x="1.500" y="2.600" width="1" height="2"/><rect x="3" y="3.200" width="1" height="1.400"/><rect x="4.800" y="2.400" width="3" height=".9"/><rect x="6.500" y="3.800" width="2" height=".8"/><rect x="9.500" y="3" width="1.200" height=".9"/><rect x="11.500" y="4" width="2.500" height=".8"/></g><g fill="#fff" fill-opacity=".72"><rect x="1.300" y="7.300" width="1.500" height="6.200"/><rect x="3.900" y="7.300" width="1.500" height="6.200"/><rect x="6.500" y="7.300" width="1.500" height="6.200"/><rect x="9.100" y="7.300" width="1.500" height="6.200"/><rect x="11.700" y="7.300" width="1.500" height="6.200"/><rect x="14.300" y="7.300" width="1.500" height="6.200"/><rect x="16.900" y="7.300" width="1.500" height="6.200"/><rect x="19" y="7.300" width="1" height="6.200"/></g></symbol>
<symbol id="i-ks" viewBox="0 0 20 20"><path fill="currentColor" fill-rule="evenodd" d="M.5 1h19v7.500H.5zM1.500 2v5.500h17V2zM2.500 3h15v1.500h-15zM3 5.300h1v1.700H3zM5 5.300h1v1.700H5zM7 5.300h1v1.700H7zM9 5.300h1v1.700H9zM11 5.300h1v1.700h-1zM13 5.300h1v1.700h-1zM15 5.300h1v1.700h-1z"/><path d="M4 9.500L16 19.500M16 9.500L4 19.500" stroke="currentColor" stroke-width="1.300" fill="none"/></symbol>
<symbol id="i-s2" viewBox="0 0 22 16"><path fill="currentColor" fill-rule="evenodd" d="M0 0h22v16H0zM2 1.500h1.200v1.200H2zM4 1.500h1.200v1.200H4zM2 3.500h1.200v1.200H2zM4 3.500h1.200v1.200H4zM2 5.500h1.200v1.200H2zM4 5.500h1.200v1.200H4zM7.500 1.500h3v.9h-3zM7.500 3.500h3v.9h-3zM12.500 1.500h1.200v1.200h-1.200zM14.500 1.500h1.200v1.200h-1.200zM12.500 3.500h1.200v1.200h-1.200zM14.500 3.500h1.200v1.200h-1.200zM12.500 5.500h1.200v1.200h-1.200zM14.500 5.500h1.200v1.200h-1.200zM17.500 1.500h3v.9h-3zM17.500 3.500h3v.9h-3zM2.800 8.500v6.500h.9V8.500zM5.400 8.500v6.500h.9V8.500zM8 8.500v6.500h.9V8.500zM10.600 8.500v6.500h.9V8.500zM13.200 8.500v6.500h.9V8.500zM15.800 8.500v6.500h.9V8.500zM18.400 8.500v6.500h.9V8.500z"/></symbol>
<symbol id="i-pn" viewBox="0 0 18 21"><path fill="currentColor" d="M1 9.500h5.500V8h4.500v1.500h6.500v4.800H1zM1.200 14.300h.9V21h-.9zM16.200 14.300h.9V21h-.9zM8.300 14.300h1.600v5.500H8.300zM7 19.600h4.200v1H7z"/><path d="M1.200 9.200L15.500.6" stroke="currentColor" stroke-width=".9" fill="none"/></symbol>
<symbol id="i-kd" viewBox="0 0 20 20"><circle cx="10" cy="8.500" r="7.900" fill="none" stroke="currentColor" stroke-width=".9"/><circle cx="10" cy="8.500" r="6.300" fill="currentColor"/><circle cx="10" cy="9.500" r="1.700" fill="none" stroke="#565656" stroke-width=".8"/><path d="M8.600 17.500l.9-6.500h1l.9 6.500z" fill="currentColor" stroke="#565656" stroke-width=".6"/><path d="M4.300 14.800L2.500 18M15.700 14.800L17.500 18" stroke="currentColor" stroke-width="1.200" fill="none"/></symbol>
<symbol id="i-wk" viewBox="0 0 20 22"><g stroke="currentColor" stroke-width="1" fill="none"><path d="M2.500 5.500v1M4.300 4.500v3M6.100 3v6M7.900 .5v11M9.700 2.500v7M11.500 4.500v3M13.300 2v8M15.100 4v4M16.900 5v2M.5 6h1.200M17.800 6h1.500"/></g><rect x=".3" y="13.300" width="19.400" height="8.200" rx="1" fill="currentColor"/><g fill="#fff" fill-opacity=".6"><rect x="1.500" y="14.500" width="1.700" height="5.800"/><rect x="4.300" y="14.500" width="1.700" height="5.800"/><rect x="7.100" y="14.500" width="1.700" height="5.800"/><rect x="9.900" y="14.500" width="1.700" height="5.800"/><rect x="12.700" y="14.500" width="1.700" height="5.800"/><rect x="15.500" y="14.500" width="1.700" height="5.800"/></g></symbol>
<symbol id="i-sp" viewBox="0 0 20 20"><g fill="currentColor"><circle cx="10" cy="10" r="2.300"/><circle cx="14.30" cy="10.00" r="1.45"/><circle cx="13.04" cy="13.04" r="1.45"/><circle cx="10.00" cy="14.30" r="1.45"/><circle cx="6.96" cy="13.04" r="1.45"/><circle cx="5.70" cy="10.00" r="1.45"/><circle cx="6.96" cy="6.96" r="1.45"/><circle cx="10.00" cy="5.70" r="1.45"/><circle cx="13.04" cy="6.96" r="1.45"/></g><path d="M16.60 10.00L19.80 10.00M14.67 14.67L16.08 16.08M10.00 16.60L10.00 19.80M5.33 14.67L3.92 16.08M3.40 10.00L0.20 10.00M5.33 5.33L3.92 3.92M10.00 3.40L10.00 0.20M14.67 5.33L16.08 3.92" stroke="currentColor" stroke-width=".9" fill="none"/></symbol>
<symbol id="i-am" viewBox="0 0 20 18"><path fill="currentColor" fill-rule="evenodd" d="M1.500 0h17A1.500 1.500 0 0 1 20 1.500V16.500H0V1.500A1.500 1.500 0 0 1 1.500 0zM1.200 4.200v1.200h17.600V4.200zM1.200 7v8.300h17.600V7z"/><rect x="2.200" y="8" width="15.600" height="6.300" fill="currentColor"/><path fill="currentColor" d="M2 16.500h3V18H2zM15 16.500h3V18h-3z"/></symbol>
<symbol id="i-ss" viewBox="0 0 20 18"><path fill="currentColor" fill-rule="evenodd" d="M0 0h20v18H0zM2 1.500h1v1H2zM4 1.500h1v1H4zM6 1.500h1v1H6zM2 3.500h1v1H2zM4 3.500h1v1H4zM6 3.500h1v1H6zM9 1.500h1v4H9zM11 1.500h1v4h-1zM13 1.500h1v4h-1zM15 1.500h1v4h-1zM17 1.500h1v4h-1zM2 6.500h16v.8H2zM2.500 10v7h.8v-7zM5 10v7h.8v-7zM7.500 10v7h.8v-7zM10 10v7h.8v-7zM12.500 10v7h.8v-7zM15 10v7h.8v-7zM17.500 10v7h.8v-7z"/></symbol>
</defs></svg>
<div id="mb" style="left:201px;top:76px;width:1102px;height:32.500px;background:#424242"></div>
<div style="left:209.5px;top:84.0px;width:28.5px;height:17.4px;border-radius:4px;background:#505050;box-shadow:inset 0 0.500px 0 rgba(255,255,255,.13),0 0 0 0.500px rgba(0,0,0,.35)"></div>
<svg style="left:218px;top:87.0px" width="12" height="12" viewBox="0 0 12 12"><path d="M2.500 5l3.200-3.200L9 5M5.700 2v3.500c0 3 1.500 4.500 4.300 4.500" fill="none" stroke="#8a8a8a" stroke-width="1.100"/></svg>
<div style="left:245.5px;top:84.0px;width:164.5px;height:17.4px;border-radius:4px;background:#5e5e5e;box-shadow:inset 0 0.500px 0 rgba(255,255,255,.13),0 0 0 0.500px rgba(0,0,0,.35)"></div>
<div style="left:300.3px;top:84.0px;width:1px;height:17.4px;background:#444"></div>
<div style="left:356.0px;top:84.0px;width:1px;height:17.4px;background:#444"></div>
<div class="t" style="left:254.5px;top:86.8px;font-size:11.3px;color:#f4f4f4;font-weight:500">编辑</div>
<svg style="left:286.0px;top:90.5px" width="8" height="6" viewBox="0 0 8 6"><path d="M1 1.300l3 3 3-3" fill="none" stroke="#bdbdbd" stroke-width="1.100"/></svg>
<div class="t" style="left:310.0px;top:86.8px;font-size:11.3px;color:#f4f4f4;font-weight:500">功能</div>
<svg style="left:341.5px;top:90.5px" width="8" height="6" viewBox="0 0 8 6"><path d="M1 1.300l3 3 3-3" fill="none" stroke="#bdbdbd" stroke-width="1.100"/></svg>
<div class="t" style="left:365.5px;top:86.8px;font-size:11.3px;color:#f4f4f4;font-weight:500">显示</div>
<svg style="left:397.0px;top:90.5px" width="8" height="6" viewBox="0 0 8 6"><path d="M1 1.300l3 3 3-3" fill="none" stroke="#bdbdbd" stroke-width="1.100"/></svg>
<div style="left:418.5px;top:84.0px;width:55.0px;height:17.4px;border-radius:4px;background:#5e5e5e;box-shadow:inset 0 0.500px 0 rgba(255,255,255,.13),0 0 0 0.500px rgba(0,0,0,.35)"></div>
<div style="left:446px;top:84.0px;width:27.500px;height:17.400px;border-radius:0 4.500px 4.500px 0;background:#2a70c6"></div>
<svg style="left:426px;top:88.3px" width="13" height="9" viewBox="0 0 13 9"><g fill="#e8e8e8"><rect x="0" y="0" width="2" height="2"/><rect x="3.600" y="0" width="2" height="2"/><rect x="7.200" y="0" width="2" height="2"/><rect x="10.800" y="0" width="2" height="2"/><rect x="0" y="3.500" width="2" height="2"/><rect x="3.600" y="3.500" width="2" height="2"/><rect x="7.200" y="3.500" width="2" height="2"/><rect x="10.800" y="3.500" width="2" height="2"/><rect x="0" y="7" width="2" height="2"/><rect x="3.600" y="7" width="2" height="2"/><rect x="7.200" y="7" width="2" height="2"/><rect x="10.800" y="7" width="2" height="2"/></g></svg>
<svg style="left:453px;top:87.8px" width="14" height="10" viewBox="0 0 14 10"><g fill="#fff"><rect x="0" y="0" width="6" height="2.200"/><rect x="7.500" y="0" width="6.500" height="2.200"/><rect x="0" y="3.800" width="14" height="2.200"/><rect x="0" y="7.600" width="4" height="2.200"/><rect x="5.500" y="7.600" width="8.500" height="2.200"/></g></svg>
<div style="left:481.0px;top:84.0px;width:55.0px;height:17.4px;border-radius:4px;background:#5e5e5e;box-shadow:inset 0 0.500px 0 rgba(255,255,255,.13),0 0 0 0.500px rgba(0,0,0,.35)"></div>
<div style="left:508.5px;top:84.0px;width:1px;height:17.4px;background:#444"></div>
<svg style="left:487px;top:87.0px" width="16" height="12" viewBox="0 0 16 12"><g fill="none" stroke="#e4e4e4" stroke-width="1.100"><path d="M.5 9.800h2.800M6.200 8.200l3.600-4.400M12.500 2.600h3"/><circle cx="4.900" cy="9.400" r="1.500"/><circle cx="11" cy="2.600" r="1.500"/></g></svg>
<svg style="left:515px;top:87.0px" width="15" height="12" viewBox="0 0 15 12"><path d="M1.500 1.500v9L7.500 6zM13.500 1.500v9L7.500 6z" fill="none" stroke="#e0e0e0" stroke-width="1.100" stroke-linejoin="round"/><path d="M5 10.500l5-9" stroke="#e0e0e0" stroke-width="1"/></svg>
<div style="left:543.8px;top:84.0px;width:28.7px;height:17.4px;border-radius:4px;background:#2a70c6;box-shadow:inset 0 0.500px 0 rgba(255,255,255,.13),0 0 0 0.500px rgba(0,0,0,.35)"></div>
<svg style="left:550.500px;top:85.8px" width="15" height="14" viewBox="0 0 15 14"><path d="M7.500 4v9.500" stroke="#fff" stroke-width="1.200"/><path d="M5.200 .5h4.600v2.500L7.500 5 5.200 3z" fill="#fff"/><path d="M1.800 6.500l2.300 2.300-2.300 2.300M13.200 6.500l-2.300 2.300 2.300 2.300" fill="none" stroke="#fff" stroke-width="1"/></svg>
<div style="left:668.2px;top:84.0px;width:73.6px;height:17.4px;border-radius:4px;background:#5e5e5e;box-shadow:inset 0 0.500px 0 rgba(255,255,255,.13),0 0 0 0.500px rgba(0,0,0,.35)"></div>
<div style="left:704.5px;top:84.0px;width:1px;height:17.4px;background:#444"></div>
<svg style="left:676.500px;top:86.5px" width="9" height="13" viewBox="0 0 9 13"><path d="M1 .8v9.800l2.400-2.200 1.700 3.800 1.500-.7-1.700-3.700H8.200z" fill="#fff"/></svg>
<svg style="left:690.0px;top:90.5px" width="8" height="6" viewBox="0 0 8 6"><path d="M1 1.300l3 3 3-3" fill="none" stroke="#bdbdbd" stroke-width="1.100"/></svg>
<svg style="left:712.500px;top:87.5px" width="11" height="11" viewBox="0 0 11 11"><path d="M5.500 0v11M0 5.500h4M7 5.500h4" stroke="#e8e8e8" stroke-width="1.100"/></svg>
<svg style="left:728.0px;top:90.5px" width="8" height="6" viewBox="0 0 8 6"><path d="M1 1.300l3 3 3-3" fill="none" stroke="#bdbdbd" stroke-width="1.100"/></svg>
<div class="t" style="left:751.5px;top:86.8px;font-size:11.0px;color:#c0c0c0;font-weight:400">吸附:</div>
<div style="left:785.4px;top:84.0px;width:137.0px;height:17.4px;border-radius:4px;background:#5e5e5e;box-shadow:inset 0 0.500px 0 rgba(255,255,255,.13),0 0 0 0.500px rgba(0,0,0,.35)"></div>
<div class="t" style="left:794.0px;top:87.0px;font-size:11.0px;color:#fff;font-weight:500">敏捷</div>
<svg style="left:908.5px;top:86.5px" width="8" height="12" viewBox="0 0 8 12"><path d="M1.200 4.500L4 1.700l2.800 2.800M1.200 7.500L4 10.300l2.800-2.800" fill="none" stroke="#c8c8c8" stroke-width="1.100"/></svg>
<div class="t" style="left:931.5px;top:86.8px;font-size:11.0px;color:#c0c0c0;font-weight:400">拖移:</div>
<div style="left:965.8px;top:84.0px;width:95.0px;height:17.4px;border-radius:4px;background:#5e5e5e;box-shadow:inset 0 0.500px 0 rgba(255,255,255,.13),0 0 0 0.500px rgba(0,0,0,.35)"></div>
<div class="t" style="left:974.0px;top:87.0px;font-size:11.0px;color:#fff;font-weight:500">无重叠</div>
<svg style="left:1047.0px;top:86.5px" width="8" height="12" viewBox="0 0 8 12"><path d="M1.200 4.500L4 1.700l2.800 2.800M1.200 7.500L4 10.300l2.800-2.800" fill="none" stroke="#c8c8c8" stroke-width="1.100"/></svg>
<div style="left:1069.0px;top:84.0px;width:26.5px;height:17.4px;border-radius:4px;background:#5e5e5e;box-shadow:inset 0 0.500px 0 rgba(255,255,255,.13),0 0 0 0.500px rgba(0,0,0,.35)"></div>
<svg style="left:1075px;top:86.0px" width="15" height="13" viewBox="0 0 15 13"><g stroke="#e0e0e0" stroke-width="1.100"><path d="M1 5.500v2M3.200 4v5M5.400 1.500v10M7.600 0v13M9.800 2.500v8M12 4v5M14 5.500v2"/></g></svg>
<div style="left:1104.0px;top:84.0px;width:54.0px;height:17.4px;border-radius:4px;background:#5e5e5e;box-shadow:inset 0 0.500px 0 rgba(255,255,255,.13),0 0 0 0.500px rgba(0,0,0,.35)"></div>
<div style="left:1131.0px;top:84.0px;width:1px;height:17.4px;background:#444"></div>
<svg style="left:1111px;top:86.0px" width="12" height="13" viewBox="0 0 12 13"><path d="M1 .8h10M1 12.200h10M6 2.500v3M4.300 4.200L6 5.800l1.700-1.600M6 10.500v-3M4.300 8.800L6 7.200l1.700 1.600" fill="none" stroke="#e8e8e8" stroke-width="1"/></svg>
<svg style="left:1138px;top:87.0px" width="13" height="11" viewBox="0 0 13 11"><path d="M.8 1v9M12.200 1v9M2.500 5.500h8M4.300 3.800L2.600 5.500l1.700 1.700M8.700 3.800l1.700 1.700-1.700 1.700" fill="none" stroke="#e8e8e8" stroke-width="1"/></svg>
<div style="left:1165px;top:84.0px;width:131px;height:17.400px;border-radius:4.500px;background:#333"></div>
<div style="left:1230.0px;top:84.0px;width:1px;height:17.4px;background:#262626"></div>
<svg style="left:1171px;top:87.0px" width="8" height="11" viewBox="0 0 8 11"><path d="M4 1v9M1.500 3.500L4 1l2.500 2.500M1.500 7.500L4 10l2.500-2.500" fill="none" stroke="#d8d8d8" stroke-width="1"/></svg>
<div style="left:1184px;top:91.0px;width:40px;height:3px;border-radius:1.500px;background:#262626"></div>
<div style="left:1190px;top:87.0px;width:11px;height:11px;border-radius:50%;background:#a8a8a8"></div>
<svg style="left:1235px;top:88.5px" width="11" height="8" viewBox="0 0 11 8"><path d="M1 4h9M3.500 1.500L1 4l2.500 2.500M7.500 1.500L10 4 7.500 6.500" fill="none" stroke="#d8d8d8" stroke-width="1"/></svg>
<div style="left:1250px;top:91.0px;width:40px;height:3px;border-radius:1.500px;background:#262626"></div>
<div style="left:1252px;top:87.0px;width:11px;height:11px;border-radius:50%;background:#a8a8a8"></div>
<div style="left:200.3px;top:108.3px;width:434.7px;height:33.400px;background:#454545;border-top:1px solid #3e3e3e"></div>
<div style="left:209.0px;top:116.0px;width:29.0px;height:18px;border-radius:4.500px;background:#5a5a5a;box-shadow:inset 0 0.500px 0 rgba(255,255,255,.13),0 0 0 0.500px rgba(0,0,0,.3)"></div>
<div style="left:247.0px;top:116.0px;width:28.5px;height:18px;border-radius:4.500px;background:#5a5a5a;box-shadow:inset 0 0.500px 0 rgba(255,255,255,.13),0 0 0 0.500px rgba(0,0,0,.3)"></div>
<div style="left:284.0px;top:116.0px;width:29.0px;height:18px;border-radius:4.500px;background:#5a5a5a;box-shadow:inset 0 0.500px 0 rgba(255,255,255,.13),0 0 0 0.500px rgba(0,0,0,.3)"></div>
<div style="left:597.0px;top:116.0px;width:28.6px;height:18px;border-radius:4.500px;background:#5a5a5a;box-shadow:inset 0 0.500px 0 rgba(255,255,255,.13),0 0 0 0.500px rgba(0,0,0,.3)"></div>
<svg style="left:218.500px;top:120.0px" width="10" height="10" viewBox="0 0 10 10"><path d="M5 0v10M0 5h10" stroke="#f0f0f0" stroke-width="1.200"/></svg>
<svg style="left:254.500px;top:118.0px" width="14" height="14" viewBox="0 0 14 14"><path d="M3.200 9.400H2.600A1.800 1.800 0 0 1 .8 7.600V2.600A1.800 1.800 0 0 1 2.600 .8h5A1.800 1.800 0 0 1 9.400 2.600v.6" fill="none" stroke="#f0f0f0" stroke-width="1"/><rect x="3.600" y="3.600" width="9.400" height="9.400" rx="2" fill="none" stroke="#f0f0f0" stroke-width="1"/><path d="M8.300 5.800v5M5.800 8.300h5" stroke="#f0f0f0" stroke-width="1"/></svg>
<div class="t" style="left:284px;width:29px;text-align:center;top:118.5px;font-size:13px;color:#fff">S</div>
<svg style="left:604px;top:119.0px" width="15" height="12" viewBox="0 0 15 12"><rect x=".6" y=".6" width="13.800" height="10.800" rx="1.500" fill="none" stroke="#e8e8e8" stroke-width="1"/><path d="M.6 3h13.800" stroke="#e8e8e8" stroke-width="1"/><path d="M7.500 4.500v4.500M5.500 7.200l2 2 2-2" fill="none" stroke="#e8e8e8" stroke-width="1"/></svg>
<div style="left:200.3px;top:141.7px;width:434.7px;height:661.5px;background:#565656"></div>
<div class="row" style="top:141.70px;background:#737373;border-bottom:1px solid #444">
<div class="num" style="background:#d2a617;line-height:28.3px">1</div>
<div style="left:25px;top:3.500px;width:53px;height:21.500px;border-radius:6px;background:#848484;box-shadow:inset 0 0.500px 0 rgba(255,255,255,.15),0 0 0 0.500px rgba(0,0,0,.3)"></div>
<svg style="left:29.500px;top:9.800px" width="7" height="10" viewBox="0 0 7 10"><path d="M1 1l4.300 3.800L1 8.600" fill="none" stroke="#f0f0f0" stroke-width="1"/></svg>
<svg style="left:49.3px;top:6.4px;color:#e8c21a" width="18" height="16"><use href="#i-dm"/></svg>
<div class="btn" style="left:86px;top:7.0px;width:35px;height:14px;background:#828282"></div>
<div style="left:103.500px;top:7.0px;width:1px;height:14px;background:#666"></div>
<div class="ms" style="left:86px;width:17.500px;top:7.2px">M</div><div class="ms" style="left:104.500px;width:16.500px;top:7.2px">S</div>
<div class="btn" style="left:127px;top:7.0px;width:35px;height:14px;background:#828282"></div>
<div style="left:144.300px;top:7.0px;width:1px;height:14px;background:#666"></div>
<div class="ms" style="left:127px;width:17.500px;top:7.2px;color:#c8281e">R</div><div class="ms" style="left:145.300px;width:16.700px;top:7.2px;color:#f5a01c;font-weight:700">I</div>
<div class="nm" style="top:7.500px;line-height:14px;font-size:11.3px">研究科学</div>
<div class="sl">
<div style="left:7.0px;top:4.7px;width:88.0px;height:2.200px;background:linear-gradient(90deg,#40d05c 84%,#f0c81c 94%)"></div>
<div style="left:7.0px;top:9.0px;width:80.0px;height:2.200px;background:#40d05c"></div>
<div style="left:97px;top:4.500px;width:1px;height:2.500px;background:#e8c81c"></div><div style="left:93px;top:8.800px;width:1px;height:2.500px;background:#e8c81c"></div>
<div class="kn" style="left:74.0px;background:rgba(185,185,185,.86)"></div>
</div>
</div>
<div class="row" style="top:170.46px;background:#565656;border-bottom:1px solid #444">
<div class="num" style="background:#d2a617;line-height:28.3px">18</div>
<div style="left:25px;top:3.500px;width:53px;height:21.500px;border-radius:6px;background:#646464;box-shadow:inset 0 0.500px 0 rgba(255,255,255,.15),0 0 0 0.500px rgba(0,0,0,.3)"></div>
<svg style="left:29.500px;top:9.800px" width="7" height="10" viewBox="0 0 7 10"><path d="M1 1l4.300 3.800L1 8.600" fill="none" stroke="#f0f0f0" stroke-width="1"/></svg>
<svg style="left:49.3px;top:6.4px;color:#e8c21a" width="18" height="16"><use href="#i-dm"/></svg>
<div class="btn" style="left:86px;top:7.0px;width:35px;height:14px"></div>
<div style="left:103.500px;top:7.0px;width:1px;height:14px;background:#4a4a4a"></div>
<div class="ms" style="left:86px;width:17.500px;top:7.2px">M</div><div class="ms" style="left:104.500px;width:16.500px;top:7.2px">S</div>
<div class="btn" style="left:127px;top:7.0px;width:35px;height:14px"></div>
<div style="left:144.300px;top:7.0px;width:1px;height:14px;background:#4a4a4a"></div>
<div class="ms" style="left:127px;width:17.500px;top:7.2px;color:#f2f2f2">R</div><div class="ms" style="left:145.300px;width:16.700px;top:7.2px;color:#f2f2f2">I</div>
<div class="nm" style="top:7.500px;line-height:14px;font-size:11.3px">伯灵顿</div>
<div class="sl">
<div class="kn" style="left:68.3px;background:#8e8e8e"></div>
</div>
</div>
<div class="row" style="top:199.22px;background:#565656;border-bottom:1px solid #444">
<div class="num" style="background:#d3cf14;line-height:28.3px">36</div>
<svg style="left:47.8px;top:7.2px;color:#e6e01a" width="21" height="14.5"><use href="#i-sy"/></svg>
<div class="btn" style="left:86px;top:7.0px;width:35px;height:14px"></div>
<div style="left:103.500px;top:7.0px;width:1px;height:14px;background:#4a4a4a"></div>
<div class="ms" style="left:86px;width:17.500px;top:7.2px">M</div><div class="ms" style="left:104.500px;width:16.500px;top:7.2px">S</div>
<div class="btn" style="left:127px;top:7.0px;width:35px;height:14px"></div>
<div style="left:144.300px;top:7.0px;width:1px;height:14px;background:#4a4a4a"></div>
<div class="ms" style="left:127px;width:17.500px;top:7.2px;color:#f2f2f2">R</div><div class="ms" style="left:145.300px;width:16.700px;top:7.2px;color:#f2f2f2">I</div>
<div class="nm" style="top:7.500px;line-height:14px;font-size:11.3px">巨大 808 低音</div>
<div class="sl">
<div class="kn" style="left:87.5px;background:#8e8e8e"></div>
</div>
</div>
<div class="row" style="top:227.98px;background:#565656;border-bottom:1px solid #444">
<div class="num" style="background:#cccf16;line-height:28.3px">37</div>
<svg style="left:47.8px;top:7.2px;color:#e0e01c" width="21" height="14.5"><use href="#i-sy"/></svg>
<div class="btn" style="left:86px;top:7.0px;width:35px;height:14px"></div>
<div style="left:103.500px;top:7.0px;width:1px;height:14px;background:#4a4a4a"></div>
<div class="ms" style="left:86px;width:17.500px;top:7.2px">M</div><div class="ms" style="left:104.500px;width:16.500px;top:7.2px">S</div>
<div class="btn" style="left:127px;top:7.0px;width:35px;height:14px"></div>
<div style="left:144.300px;top:7.0px;width:1px;height:14px;background:#4a4a4a"></div>
<div class="ms" style="left:127px;width:17.500px;top:7.2px;color:#f2f2f2">R</div><div class="ms" style="left:145.300px;width:16.700px;top:7.2px;color:#f2f2f2">I</div>
<div class="nm" style="top:7.500px;line-height:14px;font-size:11.3px">圆角方形贝司</div>
<div class="sl">
<div class="kn" style="left:48.7px;background:#8e8e8e"></div>
</div>
</div>
<div class="row" style="top:256.74px;background:#565656;border-bottom:1px solid #444">
<div class="num" style="background:#a3c91a;line-height:28.3px">38</div>
<svg style="left:47.8px;top:7.2px;color:#b4dc22" width="21" height="14.5"><use href="#i-sy"/></svg>
<div class="btn" style="left:86px;top:7.0px;width:35px;height:14px"></div>
<div style="left:103.500px;top:7.0px;width:1px;height:14px;background:#4a4a4a"></div>
<div class="ms" style="left:86px;width:17.500px;top:7.2px">M</div><div class="ms" style="left:104.500px;width:16.500px;top:7.2px">S</div>
<div class="btn" style="left:127px;top:7.0px;width:35px;height:14px"></div>
<div style="left:144.300px;top:7.0px;width:1px;height:14px;background:#4a4a4a"></div>
<div class="ms" style="left:127px;width:17.500px;top:7.2px;color:#f2f2f2">R</div><div class="ms" style="left:145.300px;width:16.700px;top:7.2px;color:#f2f2f2">I</div>
<div class="nm" style="top:7.500px;line-height:14px;font-size:11.3px">驰放人声序列</div>
<div class="sl">
<div style="left:7.0px;top:4.7px;width:40.0px;height:2.200px;background:#40d05c"></div>
<div style="left:7.0px;top:9.0px;width:43.0px;height:2.200px;background:#40d05c"></div>
<div style="left:59px;top:4.500px;width:1px;height:2.500px;background:#40d05c"></div><div style="left:59px;top:8.800px;width:1px;height:2.500px;background:#40d05c"></div>
<div class="kn" style="left:73.3px;background:rgba(158,158,158,.84)"></div>
</div>
</div>
<div class="row" style="top:285.50px;background:#565656;border-bottom:1px solid #444">
<div class="num" style="background:#7ac41c;line-height:28.3px">39</div>
<svg style="left:47.8px;top:7.2px;color:#86d624" width="21" height="14.5"><use href="#i-sy"/></svg>
<div class="btn" style="left:86px;top:7.0px;width:35px;height:14px"></div>
<div style="left:103.500px;top:7.0px;width:1px;height:14px;background:#4a4a4a"></div>
<div class="ms" style="left:86px;width:17.500px;top:7.2px">M</div><div class="ms" style="left:104.500px;width:16.500px;top:7.2px">S</div>
<div class="btn" style="left:127px;top:7.0px;width:17.300px;height:14px"></div>
<div class="ms" style="left:127px;width:17.300px;top:7.2px">R</div>
<div class="nm" style="top:7.500px;line-height:14px;font-size:11.8px">Chill Vocal...ences Loop</div>
<div class="sl">
<div class="kn" style="left:46.3px;background:#8e8e8e"></div>
</div>
</div>
<div class="row" style="top:314.26px;background:#565656;border-bottom:1px solid #444">
<div class="num" style="background:#72c41c;line-height:28.3px">40</div>
<svg style="left:48.8px;top:4.9px;color:#7ad620" width="19" height="19"><use href="#i-ks"/></svg>
<div class="btn" style="left:86px;top:7.0px;width:35px;height:14px"></div>
<div style="left:103.500px;top:7.0px;width:1px;height:14px;background:#4a4a4a"></div>
<div class="ms" style="left:86px;width:17.500px;top:7.2px">M</div><div class="ms" style="left:104.500px;width:16.500px;top:7.2px">S</div>
<div class="btn" style="left:127px;top:7.0px;width:35px;height:14px"></div>
<div style="left:144.300px;top:7.0px;width:1px;height:14px;background:#4a4a4a"></div>
<div class="ms" style="left:127px;width:17.500px;top:7.2px;color:#f2f2f2">R</div><div class="ms" style="left:145.300px;width:16.700px;top:7.2px;color:#f2f2f2">I</div>
<div class="nm" style="top:7.500px;line-height:14px;font-size:11.3px">弹拨尼龙弦吉他</div>
<div class="sl">
<div style="left:7.0px;top:4.7px;width:65.0px;height:2.200px;background:#40d05c"></div>
<div style="left:7.0px;top:9.0px;width:64.0px;height:2.200px;background:#40d05c"></div>
<div style="left:84px;top:4.500px;width:1px;height:2.500px;background:#e8c81c"></div><div style="left:85.500px;top:8.800px;width:1px;height:2.500px;background:#e8c81c"></div>
<div class="kn" style="left:67.3px;background:rgba(158,158,158,.84)"></div>
</div>
</div>
<div class="row" style="top:343.02px;background:#565656;border-bottom:1px solid #444">
<div class="num" style="background:#62c21e;line-height:28.3px">41</div>
<svg style="left:48.8px;top:4.9px;color:#68d422" width="19" height="19"><use href="#i-ks"/></svg>
<div class="btn" style="left:86px;top:7.0px;width:35px;height:14px"></div>
<div style="left:103.500px;top:7.0px;width:1px;height:14px;background:#4a4a4a"></div>
<div class="ms" style="left:86px;width:17.500px;top:7.2px">M</div><div class="ms" style="left:104.500px;width:16.500px;top:7.2px">S</div>
<div class="btn" style="left:127px;top:7.0px;width:35px;height:14px"></div>
<div style="left:144.300px;top:7.0px;width:1px;height:14px;background:#4a4a4a"></div>
<div class="ms" style="left:127px;width:17.500px;top:7.2px;color:#f2f2f2">R</div><div class="ms" style="left:145.300px;width:16.700px;top:7.2px;color:#f2f2f2">I</div>
<div class="nm" style="top:7.500px;line-height:14px;font-size:11.8px">Plucked Nylon Guitar Top</div>
<div class="sl">
<div class="kn" style="left:35.5px;background:#8e8e8e"></div>
</div>
</div>
<div class="row" style="top:371.78px;background:#565656;border-bottom:1px solid #444">
<div class="num" style="background:#50c120;line-height:28.3px">42</div>
<svg style="left:48.8px;top:4.9px;color:#56d024" width="19" height="19"><use href="#i-ks"/></svg>
<div class="btn" style="left:86px;top:7.0px;width:35px;height:14px"></div>
<div style="left:103.500px;top:7.0px;width:1px;height:14px;background:#4a4a4a"></div>
<div class="ms" style="left:86px;width:17.500px;top:7.2px">M</div><div class="ms" style="left:104.500px;width:16.500px;top:7.2px">S</div>
<div class="btn" style="left:127px;top:7.0px;width:35px;height:14px"></div>
<div style="left:144.300px;top:7.0px;width:1px;height:14px;background:#4a4a4a"></div>
<div class="ms" style="left:127px;width:17.500px;top:7.2px;color:#f2f2f2">R</div><div class="ms" style="left:145.300px;width:16.700px;top:7.2px;color:#f2f2f2">I</div>
<div class="nm" style="top:7.500px;line-height:14px;font-size:11.3px">70 年代模拟主音</div>
<div class="sl">
<div class="kn" style="left:62.9px;background:#8e8e8e"></div>
</div>
</div>
<div class="row" style="top:400.54px;background:#565656;border-bottom:1px solid #444">
<div class="num" style="background:#2abd2a;line-height:28.3px">43</div>
<svg style="left:48.8px;top:4.9px;color:#30cc32" width="19" height="19"><use href="#i-ks"/></svg>
<div class="btn" style="left:86px;top:7.0px;width:35px;height:14px"></div>
<div style="left:103.500px;top:7.0px;width:1px;height:14px;background:#4a4a4a"></div>
<div class="ms" style="left:86px;width:17.500px;top:7.2px">M</div><div class="ms" style="left:104.500px;width:16.500px;top:7.2px">S</div>
<div class="btn" style="left:127px;top:7.0px;width:35px;height:14px"></div>
<div style="left:144.300px;top:7.0px;width:1px;height:14px;background:#4a4a4a"></div>
<div class="ms" style="left:127px;width:17.500px;top:7.2px;color:#f2f2f2">R</div><div class="ms" style="left:145.300px;width:16.700px;top:7.2px;color:#f2f2f2">I</div>
<div class="nm" style="top:7.500px;line-height:14px;font-size:11.8px">70s Analog Lead Top</div>
<div class="sl">
<div class="kn" style="left:45.3px;background:#8e8e8e"></div>
</div>
</div>
<div class="row" style="top:429.30px;background:#565656;border-bottom:1px solid #444">
<div class="num" style="background:#1cbd32;line-height:28.3px">44</div>
<svg style="left:47.3px;top:6.4px;color:#20dc3c" width="22" height="16"><use href="#i-s2"/></svg>
<div class="btn" style="left:86px;top:7.0px;width:35px;height:14px"></div>
<div style="left:103.500px;top:7.0px;width:1px;height:14px;background:#4a4a4a"></div>
<div class="ms" style="left:86px;width:17.500px;top:7.2px">M</div><div class="ms" style="left:104.500px;width:16.500px;top:7.2px">S</div>
<div class="btn" style="left:127px;top:7.0px;width:17.300px;height:14px"></div>
<div class="ms" style="left:127px;width:17.300px;top:7.2px">R</div>
<div class="nm" style="top:7.500px;line-height:14px;font-size:11.8px">Square Blip Lead</div>
<div class="sl">
<div class="kn" style="left:50.7px;background:#8e8e8e"></div>
</div>
</div>
<div class="row" style="top:458.06px;background:#565656;border-bottom:1px solid #444">
<div class="num" style="background:#1cbd52;line-height:28.3px">45</div>
<svg style="left:47.3px;top:6.4px;color:#20dc62" width="22" height="16"><use href="#i-s2"/></svg>
<div class="btn" style="left:86px;top:7.0px;width:35px;height:14px"></div>
<div style="left:103.500px;top:7.0px;width:1px;height:14px;background:#4a4a4a"></div>
<div class="ms" style="left:86px;width:17.500px;top:7.2px">M</div><div class="ms" style="left:104.500px;width:16.500px;top:7.2px">S</div>
<div class="btn" style="left:127px;top:7.0px;width:17.300px;height:14px"></div>
<div class="ms" style="left:127px;width:17.300px;top:7.2px">R</div>
<div class="nm" style="top:7.500px;line-height:14px;font-size:11.8px">Square Blip Lead Top</div>
<div class="sl">
<div class="kn" style="left:32.1px;background:#8e8e8e"></div>
</div>
</div>
<div class="row" style="top:486.82px;background:#565656;border-bottom:1px solid #444">
<div class="num" style="background:#1cbd62;line-height:28.3px">46</div>
<svg style="left:47.3px;top:6.4px;color:#20dc74" width="22" height="16"><use href="#i-s2"/></svg>
<div class="btn" style="left:86px;top:7.0px;width:35px;height:14px"></div>
<div style="left:103.500px;top:7.0px;width:1px;height:14px;background:#4a4a4a"></div>
<div class="ms" style="left:86px;width:17.500px;top:7.2px">M</div><div class="ms" style="left:104.500px;width:16.500px;top:7.2px">S</div>
<div class="btn" style="left:127px;top:7.0px;width:35px;height:14px"></div>
<div style="left:144.300px;top:7.0px;width:1px;height:14px;background:#4a4a4a"></div>
<div class="ms" style="left:127px;width:17.500px;top:7.2px;color:#f2f2f2">R</div><div class="ms" style="left:145.300px;width:16.700px;top:7.2px;color:#f2f2f2">I</div>
<div class="nm" style="top:7.500px;line-height:14px;font-size:11.8px">Cut Up Synth Bells</div>
<div class="sl">
<div class="kn" style="left:45.3px;background:#8e8e8e"></div>
</div>
</div>
<div class="row" style="top:515.58px;background:#565656;border-bottom:1px solid #444">
<div class="num" style="background:#1cbd76;line-height:28.3px">47</div>
<svg style="left:47.3px;top:6.4px;color:#20dc88" width="22" height="16"><use href="#i-s2"/></svg>
<div class="btn" style="left:86px;top:7.0px;width:35px;height:14px"></div>
<div style="left:103.500px;top:7.0px;width:1px;height:14px;background:#4a4a4a"></div>
<div class="ms" style="left:86px;width:17.500px;top:7.2px">M</div><div class="ms" style="left:104.500px;width:16.500px;top:7.2px">S</div>
<div class="btn" style="left:127px;top:7.0px;width:35px;height:14px"></div>
<div style="left:144.300px;top:7.0px;width:1px;height:14px;background:#4a4a4a"></div>
<div class="ms" style="left:127px;width:17.500px;top:7.2px;color:#f2f2f2">R</div><div class="ms" style="left:145.300px;width:16.700px;top:7.2px;color:#f2f2f2">I</div>
<div class="nm" style="top:7.500px;line-height:14px;font-size:11.8px">Cut Up Synth Bells Top</div>
<div class="sl">
<div class="kn" style="left:28.8px;background:#8e8e8e"></div>
</div>
</div>
<div class="row" style="top:544.34px;background:#565656;border-bottom:1px solid #444">
<div class="num" style="background:#1cbd86;line-height:28.3px">48</div>
<svg style="left:47.3px;top:6.4px;color:#20dc98" width="22" height="16"><use href="#i-s2"/></svg>
<div class="btn" style="left:86px;top:7.0px;width:35px;height:14px"></div>
<div style="left:103.500px;top:7.0px;width:1px;height:14px;background:#4a4a4a"></div>
<div class="ms" style="left:86px;width:17.500px;top:7.2px">M</div><div class="ms" style="left:104.500px;width:16.500px;top:7.2px">S</div>
<div class="btn" style="left:127px;top:7.0px;width:17.300px;height:14px"></div>
<div class="ms" style="left:127px;width:17.300px;top:7.2px">R</div>
<div class="nm" style="top:7.500px;line-height:14px;font-size:11.8px">Mallet Vibes</div>
<div class="sl">
<div class="kn" style="left:32.1px;background:#8e8e8e"></div>
</div>
</div>
<div class="row" style="top:573.10px;background:#565656;border-bottom:1px solid #444">
<div class="num" style="background:#1ac09c;line-height:28.3px">49</div>
<svg style="left:49.3px;top:3.1px;color:#16d6a6" width="18" height="21"><use href="#i-pn"/></svg>
<div class="btn" style="left:86px;top:7.0px;width:35px;height:14px"></div>
<div style="left:103.500px;top:7.0px;width:1px;height:14px;background:#4a4a4a"></div>
<div class="ms" style="left:86px;width:17.500px;top:7.2px">M</div><div class="ms" style="left:104.500px;width:16.500px;top:7.2px">S</div>
<div class="btn" style="left:127px;top:7.0px;width:35px;height:14px"></div>
<div style="left:144.300px;top:7.0px;width:1px;height:14px;background:#4a4a4a"></div>
<div class="ms" style="left:127px;width:17.500px;top:7.2px;color:#f2f2f2">R</div><div class="ms" style="left:145.300px;width:16.700px;top:7.2px;color:#f2f2f2">I</div>
<div class="nm" style="top:7.500px;line-height:14px;font-size:11.3px">施坦威大钢琴</div>
<div class="sl">
<div class="kn" style="left:25.1px;background:#8e8e8e"></div>
</div>
</div>
<div class="row" style="top:601.86px;background:#565656;border-bottom:1px solid #444">
<div class="num" style="background:#1ac4c8;line-height:28.3px">50</div>
<svg style="left:48.8px;top:4.9px;color:#16d4d8" width="19" height="19"><use href="#i-kd"/></svg>
<div class="btn" style="left:86px;top:7.0px;width:35px;height:14px"></div>
<div style="left:103.500px;top:7.0px;width:1px;height:14px;background:#4a4a4a"></div>
<div class="ms" style="left:86px;width:17.500px;top:7.2px">M</div><div class="ms" style="left:104.500px;width:16.500px;top:7.2px">S</div>
<div class="btn" style="left:127px;top:7.0px;width:35px;height:14px"></div>
<div style="left:144.300px;top:7.0px;width:1px;height:14px;background:#4a4a4a"></div>
<div class="ms" style="left:127px;width:17.500px;top:7.2px;color:#f2f2f2">R</div><div class="ms" style="left:145.300px;width:16.700px;top:7.2px;color:#f2f2f2">I</div>
<div class="nm" style="top:7.500px;line-height:14px;font-size:11.3px">底鼓 2 低频 - 抽象思考</div>
<div class="sl">
<div style="left:10.0px;top:4.7px;width:87.5px;height:2.200px;background:linear-gradient(90deg,#40d05c 71%,#f0c81c 81%)"></div>
<div style="left:10.0px;top:9.0px;width:87.5px;height:2.200px;background:linear-gradient(90deg,#40d05c 71%,#f0c81c 81%)"></div>
<div class="kn" style="left:0.7px;background:rgba(185,185,185,.86)"></div>
</div>
</div>
<div class="row" style="top:630.62px;background:#565656;border-bottom:1px solid #444">
<div class="num" style="background:#1ac4c8;line-height:28.3px">51</div>
<svg style="left:48.3px;top:3.4px;color:#1cc8dc" width="20" height="22"><use href="#i-wk"/></svg>
<div class="btn" style="left:86px;top:7.0px;width:35px;height:14px"></div>
<div style="left:103.500px;top:7.0px;width:1px;height:14px;background:#4a4a4a"></div>
<div class="ms" style="left:86px;width:17.500px;top:7.2px">M</div><div class="ms" style="left:104.500px;width:16.500px;top:7.2px">S</div>
<div class="btn" style="left:127px;top:7.0px;width:35px;height:14px"></div>
<div style="left:144.300px;top:7.0px;width:1px;height:14px;background:#4a4a4a"></div>
<div class="ms" style="left:127px;width:17.500px;top:7.2px;color:#f2f2f2">R</div><div class="ms" style="left:145.300px;width:16.700px;top:7.2px;color:#f2f2f2">I</div>
<div class="nm" style="top:7.500px;line-height:14px;font-size:11.8px">Canyon Chop Lead</div>
<div class="sl">
<div style="left:7.0px;top:4.7px;width:51.0px;height:2.200px;background:#40d05c"></div>
<div style="left:7.0px;top:9.0px;width:51.0px;height:2.200px;background:#40d05c"></div>
<div class="kn" style="left:51.4px;background:rgba(158,158,158,.84)"></div>
</div>
</div>
<div class="row" style="top:659.38px;background:#565656;border-bottom:1px solid #444">
<div class="num" style="background:#1f8aa8;line-height:28.3px">52</div>
<svg style="left:48.3px;top:3.4px;color:#24b0e8" width="20" height="22"><use href="#i-wk"/></svg>
<div class="btn" style="left:86px;top:7.0px;width:35px;height:14px"></div>
<div style="left:103.500px;top:7.0px;width:1px;height:14px;background:#4a4a4a"></div>
<div class="ms" style="left:86px;width:17.500px;top:7.2px">M</div><div class="ms" style="left:104.500px;width:16.500px;top:7.2px">S</div>
<div class="btn" style="left:127px;top:7.0px;width:35px;height:14px"></div>
<div style="left:144.300px;top:7.0px;width:1px;height:14px;background:#4a4a4a"></div>
<div class="ms" style="left:127px;width:17.500px;top:7.2px;color:#f2f2f2">R</div><div class="ms" style="left:145.300px;width:16.700px;top:7.2px;color:#f2f2f2">I</div>
<div class="nm" style="top:7.500px;line-height:14px;font-size:11.3px">铃铛</div>
<div class="sl">
<div style="left:7.0px;top:4.7px;width:39.8px;height:2.200px;background:#40d05c"></div>
<div style="left:7.0px;top:9.0px;width:50.0px;height:2.200px;background:#40d05c"></div>
<div class="kn" style="left:92.6px;background:rgba(158,158,158,.84)"></div>
</div>
</div>
<div class="row" style="top:688.14px;background:#565656;border-bottom:1px solid #444">
<div class="num" style="background:#2282a8;line-height:28.3px">53</div>
<svg style="left:47.8px;top:7.2px;color:#2cb2f0" width="21" height="14.5"><use href="#i-sy"/></svg>
<div class="btn" style="left:86px;top:7.0px;width:35px;height:14px"></div>
<div style="left:103.500px;top:7.0px;width:1px;height:14px;background:#4a4a4a"></div>
<div class="ms" style="left:86px;width:17.500px;top:7.2px">M</div><div class="ms" style="left:104.500px;width:16.500px;top:7.2px">S</div>
<div class="btn" style="left:127px;top:7.0px;width:35px;height:14px"></div>
<div style="left:144.300px;top:7.0px;width:1px;height:14px;background:#4a4a4a"></div>
<div class="ms" style="left:127px;width:17.500px;top:7.2px;color:#f2f2f2">R</div><div class="ms" style="left:145.300px;width:16.700px;top:7.2px;color:#f2f2f2">I</div>
<div class="nm" style="top:7.500px;line-height:14px;font-size:11.3px">波形运动贝司</div>
<div class="sl">
<div style="left:7.0px;top:4.7px;width:66.0px;height:2.200px;background:#40d05c"></div>
<div style="left:7.0px;top:9.0px;width:68.5px;height:2.200px;background:#40d05c"></div>
<div class="kn" style="left:72.7px;background:rgba(158,158,158,.84)"></div>
</div>
</div>
<div class="row" style="top:716.90px;background:#565656;border-bottom:1px solid #444">
<div class="num" style="background:#2a84b2;line-height:28.3px">54</div>
<svg style="left:48.8px;top:4.9px;color:#2fb4f4" width="19" height="19"><use href="#i-sp"/></svg>
<div class="btn" style="left:86px;top:7.0px;width:35px;height:14px"></div>
<div style="left:103.500px;top:7.0px;width:1px;height:14px;background:#4a4a4a"></div>
<div class="ms" style="left:86px;width:17.500px;top:7.2px">M</div><div class="ms" style="left:104.500px;width:16.500px;top:7.2px">S</div>
<div class="btn" style="left:127px;top:7.0px;width:17.300px;height:14px"></div>
<div class="ms" style="left:127px;width:17.300px;top:7.2px">R</div>
<div class="nm" style="top:7.500px;line-height:14px;font-size:11.8px">Manzana FX</div>
<div class="sl">
<div class="kn" style="left:72.7px;background:#8e8e8e"></div>
</div>
</div>
<div class="row" style="top:745.66px;background:#565656;border-bottom:1px solid #444">
<div class="num" style="background:#2c80b6;line-height:28.3px">55</div>
<div style="left:25px;top:3.500px;width:53px;height:21.500px;border-radius:6px;background:#646464;box-shadow:inset 0 0.500px 0 rgba(255,255,255,.15),0 0 0 0.500px rgba(0,0,0,.3)"></div>
<svg style="left:29.500px;top:9.800px" width="7" height="10" viewBox="0 0 7 10"><path d="M1 1l4.300 3.800L1 8.600" fill="none" stroke="#f0f0f0" stroke-width="1"/></svg>
<svg style="left:48.8px;top:5.9px;color:#30b6f8" width="19" height="17"><use href="#i-am"/></svg>
<div class="btn" style="left:86px;top:7.0px;width:35px;height:14px"></div>
<div style="left:103.500px;top:7.0px;width:1px;height:14px;background:#4a4a4a"></div>
<div class="ms" style="left:86px;width:17.500px;top:7.2px">M</div><div class="ms" style="left:104.500px;width:16.500px;top:7.2px">S</div>
<div class="btn" style="left:127px;top:7.0px;width:35px;height:14px"></div>
<div style="left:144.300px;top:7.0px;width:1px;height:14px;background:#4a4a4a"></div>
<div class="ms" style="left:127px;width:17.500px;top:7.2px;color:#f2f2f2">R</div><div class="ms" style="left:145.300px;width:16.700px;top:7.2px;color:#f2f2f2">I</div>
<div class="nm" style="top:7.500px;line-height:14px;font-size:11.3px">魔音琴</div>
<div class="sl">
<div class="kn" style="left:72.7px;background:#8e8e8e"></div>
</div>
</div>
<div class="row" style="top:774.42px;background:#565656;border-bottom:1px solid #444">
<div class="num" style="background:#3a6cb0;line-height:28.3px">58</div>
<div style="left:25px;top:3.500px;width:53px;height:21.500px;border-radius:6px;background:#646464;box-shadow:inset 0 0.500px 0 rgba(255,255,255,.15),0 0 0 0.500px rgba(0,0,0,.3)"></div>
<svg style="left:29.500px;top:9.800px" width="7" height="10" viewBox="0 0 7 10"><path d="M1 1l4.300 3.800L1 8.600" fill="none" stroke="#f0f0f0" stroke-width="1"/></svg>
<svg style="left:48.8px;top:5.9px;color:#4a9cf8" width="19" height="17"><use href="#i-ss"/></svg>
<div class="btn" style="left:86px;top:7.0px;width:35px;height:14px"></div>
<div style="left:103.500px;top:7.0px;width:1px;height:14px;background:#4a4a4a"></div>
<div class="ms" style="left:86px;width:17.500px;top:7.2px">M</div><div class="ms" style="left:104.500px;width:16.500px;top:7.2px">S</div>
<div class="btn" style="left:127px;top:7.0px;width:35px;height:14px"></div>
<div style="left:144.300px;top:7.0px;width:1px;height:14px;background:#4a4a4a"></div>
<div class="ms" style="left:127px;width:17.500px;top:7.2px;color:#f2f2f2">R</div><div class="ms" style="left:145.300px;width:16.700px;top:7.2px;color:#f2f2f2">I</div>
<div class="nm" style="top:7.500px;line-height:14px;font-size:11.8px">Super Synths</div>
<div class="sl">
<div class="kn" style="left:72.7px;background:#8e8e8e"></div>
</div>
</div>
<div style="left:200.3px;top:800.8px;width:434.7px;height:13px;background:#2f2f2f"></div><div id="ws" style="left:635.0px;top:108.0px;width:656.0px;height:704.0px;overflow:hidden;background:#2e2e2e">
<div style="left:0;top:0;width:656px;height:17.500px;background:#575757;border-top:1px solid #3a3a3a"></div>
<div style="left:0;top:17.500px;width:656px;height:16.200px;background:#444444;border-top:1px solid #343434"></div>
<div style="left:0;top:33.200px;width:656px;height:1px;background:#262626"></div>
<div style="left:0;top:33.7px;width:656px;height:28.8px;background:#383838"></div>
<div style="left:0;top:61.46px;width:656px;height:1px;background:#252525"></div>
<div style="left:0;top:90.22px;width:656px;height:1px;background:#252525"></div>
<div style="left:0;top:118.98px;width:656px;height:1px;background:#252525"></div>
<div style="left:0;top:147.74px;width:656px;height:1px;background:#252525"></div>
<div style="left:0;top:176.50px;width:656px;height:1px;background:#252525"></div>
<div style="left:0;top:205.26px;width:656px;height:1px;background:#252525"></div>
<div style="left:0;top:234.02px;width:656px;height:1px;background:#252525"></div>
<div style="left:0;top:262.78px;width:656px;height:1px;background:#252525"></div>
<div style="left:0;top:291.54px;width:656px;height:1px;background:#252525"></div>
<div style="left:0;top:320.30px;width:656px;height:1px;background:#252525"></div>
<div style="left:0;top:349.06px;width:656px;height:1px;background:#252525"></div>
<div style="left:0;top:377.82px;width:656px;height:1px;background:#252525"></div>
<div style="left:0;top:406.58px;width:656px;height:1px;background:#252525"></div>
<div style="left:0;top:435.34px;width:656px;height:1px;background:#252525"></div>
<div style="left:0;top:464.10px;width:656px;height:1px;background:#252525"></div>
<div style="left:0;top:492.86px;width:656px;height:1px;background:#252525"></div>
<div style="left:0;top:521.62px;width:656px;height:1px;background:#252525"></div>
<div style="left:0;top:550.38px;width:656px;height:1px;background:#252525"></div>
<div style="left:0;top:579.14px;width:656px;height:1px;background:#252525"></div>
<div style="left:0;top:607.90px;width:656px;height:1px;background:#252525"></div>
<div style="left:0;top:636.66px;width:656px;height:1px;background:#252525"></div>
<div style="left:0;top:665.42px;width:656px;height:1px;background:#252525"></div>
<div style="left:0;top:694.18px;width:656px;height:1px;background:#252525"></div>
<div style="left:13.68px;top:33.7px;width:1px;height:660.0px;background:#444444"></div>
<div style="left:13.68px;top:18.500px;width:1px;height:15px;background:#6a6a6a"></div>
<div style="left:19.04px;top:26.500px;width:1px;height:7px;background:#5e5e5e"></div>
<div style="left:24.40px;top:26.500px;width:1px;height:7px;background:#5e5e5e"></div>
<div style="left:29.76px;top:26.500px;width:1px;height:7px;background:#5e5e5e"></div>
<div style="left:35.12px;top:33.7px;width:1px;height:660.0px;background:#444444"></div>
<div style="left:35.12px;top:18.500px;width:1px;height:15px;background:#6a6a6a"></div>
<div style="left:40.48px;top:26.500px;width:1px;height:7px;background:#5e5e5e"></div>
<div style="left:45.84px;top:26.500px;width:1px;height:7px;background:#5e5e5e"></div>
<div style="left:51.20px;top:26.500px;width:1px;height:7px;background:#5e5e5e"></div>
<div style="left:56.56px;top:33.7px;width:1px;height:660.0px;background:#444444"></div>
<div style="left:56.56px;top:18.500px;width:1px;height:15px;background:#6a6a6a"></div>
<div style="left:61.92px;top:26.500px;width:1px;height:7px;background:#5e5e5e"></div>
<div style="left:67.28px;top:26.500px;width:1px;height:7px;background:#5e5e5e"></div>
<div style="left:72.64px;top:26.500px;width:1px;height:7px;background:#5e5e5e"></div>
<div style="left:78.00px;top:33.7px;width:1px;height:660.0px;background:#4a4a4a"></div>
<div style="left:78.00px;top:1px;width:1px;height:33px;background:#8a8a8a"></div>
<div class="t" style="left:81.50px;top:3px;font-size:11.2px;color:#dcdcdc">33</div>
<div style="left:83.36px;top:26.500px;width:1px;height:7px;background:#5e5e5e"></div>
<div style="left:88.72px;top:26.500px;width:1px;height:7px;background:#5e5e5e"></div>
<div style="left:94.08px;top:26.500px;width:1px;height:7px;background:#5e5e5e"></div>
<div style="left:99.44px;top:33.7px;width:1px;height:660.0px;background:#444444"></div>
<div style="left:99.44px;top:18.500px;width:1px;height:15px;background:#6a6a6a"></div>
<div style="left:104.80px;top:26.500px;width:1px;height:7px;background:#5e5e5e"></div>
<div style="left:110.16px;top:26.500px;width:1px;height:7px;background:#5e5e5e"></div>
<div style="left:115.52px;top:26.500px;width:1px;height:7px;background:#5e5e5e"></div>
<div style="left:120.88px;top:33.7px;width:1px;height:660.0px;background:#444444"></div>
<div style="left:120.88px;top:18.500px;width:1px;height:15px;background:#6a6a6a"></div>
<div style="left:126.24px;top:26.500px;width:1px;height:7px;background:#5e5e5e"></div>
<div style="left:131.60px;top:26.500px;width:1px;height:7px;background:#5e5e5e"></div>
<div style="left:136.96px;top:26.500px;width:1px;height:7px;background:#5e5e5e"></div>
<div style="left:142.32px;top:33.7px;width:1px;height:660.0px;background:#444444"></div>
<div style="left:142.32px;top:18.500px;width:1px;height:15px;background:#6a6a6a"></div>
<div style="left:147.68px;top:26.500px;width:1px;height:7px;background:#5e5e5e"></div>
<div style="left:153.04px;top:26.500px;width:1px;height:7px;background:#5e5e5e"></div>
<div style="left:158.40px;top:26.500px;width:1px;height:7px;background:#5e5e5e"></div>
<div style="left:163.76px;top:33.7px;width:1px;height:660.0px;background:#4a4a4a"></div>
<div style="left:163.76px;top:1px;width:1px;height:33px;background:#8a8a8a"></div>
<div class="t" style="left:167.26px;top:3px;font-size:11.2px;color:#dcdcdc">37</div>
<div style="left:169.12px;top:26.500px;width:1px;height:7px;background:#5e5e5e"></div>
<div style="left:174.48px;top:26.500px;width:1px;height:7px;background:#5e5e5e"></div>
<div style="left:179.84px;top:26.500px;width:1px;height:7px;background:#5e5e5e"></div>
<div style="left:185.20px;top:33.7px;width:1px;height:660.0px;background:#444444"></div>
<div style="left:185.20px;top:18.500px;width:1px;height:15px;background:#6a6a6a"></div>
<div style="left:190.56px;top:26.500px;width:1px;height:7px;background:#5e5e5e"></div>
<div style="left:195.92px;top:26.500px;width:1px;height:7px;background:#5e5e5e"></div>
<div style="left:201.28px;top:26.500px;width:1px;height:7px;background:#5e5e5e"></div>
<div style="left:206.64px;top:33.7px;width:1px;height:660.0px;background:#444444"></div>
<div style="left:206.64px;top:18.500px;width:1px;height:15px;background:#6a6a6a"></div>
<div style="left:212.00px;top:26.500px;width:1px;height:7px;background:#5e5e5e"></div>
<div style="left:217.36px;top:26.500px;width:1px;height:7px;background:#5e5e5e"></div>
<div style="left:222.72px;top:26.500px;width:1px;height:7px;background:#5e5e5e"></div>
<div style="left:228.08px;top:33.7px;width:1px;height:660.0px;background:#444444"></div>
<div style="left:228.08px;top:18.500px;width:1px;height:15px;background:#6a6a6a"></div>
<div style="left:233.44px;top:26.500px;width:1px;height:7px;background:#5e5e5e"></div>
<div style="left:238.80px;top:26.500px;width:1px;height:7px;background:#5e5e5e"></div>
<div style="left:244.16px;top:26.500px;width:1px;height:7px;background:#5e5e5e"></div>
<div style="left:249.52px;top:33.7px;width:1px;height:660.0px;background:#4a4a4a"></div>
<div style="left:249.52px;top:1px;width:1px;height:33px;background:#8a8a8a"></div>
<div class="t" style="left:253.02px;top:3px;font-size:11.2px;color:#dcdcdc">41</div>
<div style="left:254.88px;top:26.500px;width:1px;height:7px;background:#5e5e5e"></div>
<div style="left:260.24px;top:26.500px;width:1px;height:7px;background:#5e5e5e"></div>
<div style="left:265.60px;top:26.500px;width:1px;height:7px;background:#5e5e5e"></div>
<div style="left:270.96px;top:33.7px;width:1px;height:660.0px;background:#444444"></div>
<div style="left:270.96px;top:18.500px;width:1px;height:15px;background:#6a6a6a"></div>
<div style="left:276.32px;top:26.500px;width:1px;height:7px;background:#5e5e5e"></div>
<div style="left:281.68px;top:26.500px;width:1px;height:7px;background:#5e5e5e"></div>
<div style="left:287.04px;top:26.500px;width:1px;height:7px;background:#5e5e5e"></div>
<div style="left:292.40px;top:33.7px;width:1px;height:660.0px;background:#444444"></div>
<div style="left:292.40px;top:18.500px;width:1px;height:15px;background:#6a6a6a"></div>
<div style="left:297.76px;top:26.500px;width:1px;height:7px;background:#5e5e5e"></div>
<div style="left:303.12px;top:26.500px;width:1px;height:7px;background:#5e5e5e"></div>
<div style="left:308.48px;top:26.500px;width:1px;height:7px;background:#5e5e5e"></div>
<div style="left:313.84px;top:33.7px;width:1px;height:660.0px;background:#444444"></div>
<div style="left:313.84px;top:18.500px;width:1px;height:15px;background:#6a6a6a"></div>
<div style="left:319.20px;top:26.500px;width:1px;height:7px;background:#5e5e5e"></div>
<div style="left:324.56px;top:26.500px;width:1px;height:7px;background:#5e5e5e"></div>
<div style="left:329.92px;top:26.500px;width:1px;height:7px;background:#5e5e5e"></div>
<div style="left:335.28px;top:33.7px;width:1px;height:660.0px;background:#4a4a4a"></div>
<div style="left:335.28px;top:1px;width:1px;height:33px;background:#8a8a8a"></div>
<div class="t" style="left:338.78px;top:3px;font-size:11.2px;color:#dcdcdc">45</div>
<div style="left:340.64px;top:26.500px;width:1px;height:7px;background:#5e5e5e"></div>
<div style="left:346.00px;top:26.500px;width:1px;height:7px;background:#5e5e5e"></div>
<div style="left:351.36px;top:26.500px;width:1px;height:7px;background:#5e5e5e"></div>
<div style="left:356.72px;top:33.7px;width:1px;height:660.0px;background:#444444"></div>
<div style="left:356.72px;top:18.500px;width:1px;height:15px;background:#6a6a6a"></div>
<div style="left:362.08px;top:26.500px;width:1px;height:7px;background:#5e5e5e"></div>
<div style="left:367.44px;top:26.500px;width:1px;height:7px;background:#5e5e5e"></div>
<div style="left:372.80px;top:26.500px;width:1px;height:7px;background:#5e5e5e"></div>
<div style="left:378.16px;top:33.7px;width:1px;height:660.0px;background:#444444"></div>
<div style="left:378.16px;top:18.500px;width:1px;height:15px;background:#6a6a6a"></div>
<div style="left:383.52px;top:26.500px;width:1px;height:7px;background:#5e5e5e"></div>
<div style="left:388.88px;top:26.500px;width:1px;height:7px;background:#5e5e5e"></div>
<div style="left:394.24px;top:26.500px;width:1px;height:7px;background:#5e5e5e"></div>
<div style="left:399.60px;top:33.7px;width:1px;height:660.0px;background:#444444"></div>
<div style="left:399.60px;top:18.500px;width:1px;height:15px;background:#6a6a6a"></div>
<div style="left:404.96px;top:26.500px;width:1px;height:7px;background:#5e5e5e"></div>
<div style="left:410.32px;top:26.500px;width:1px;height:7px;background:#5e5e5e"></div>
<div style="left:415.68px;top:26.500px;width:1px;height:7px;background:#5e5e5e"></div>
<div style="left:421.04px;top:33.7px;width:1px;height:660.0px;background:#4a4a4a"></div>
<div style="left:421.04px;top:1px;width:1px;height:33px;background:#8a8a8a"></div>
<div class="t" style="left:424.54px;top:3px;font-size:11.2px;color:#dcdcdc">49</div>
<div style="left:426.40px;top:26.500px;width:1px;height:7px;background:#5e5e5e"></div>
<div style="left:431.76px;top:26.500px;width:1px;height:7px;background:#5e5e5e"></div>
<div style="left:437.12px;top:26.500px;width:1px;height:7px;background:#5e5e5e"></div>
<div style="left:442.48px;top:33.7px;width:1px;height:660.0px;background:#444444"></div>
<div style="left:442.48px;top:18.500px;width:1px;height:15px;background:#6a6a6a"></div>
<div style="left:447.84px;top:26.500px;width:1px;height:7px;background:#5e5e5e"></div>
<div style="left:453.20px;top:26.500px;width:1px;height:7px;background:#5e5e5e"></div>
<div style="left:458.56px;top:26.500px;width:1px;height:7px;background:#5e5e5e"></div>
<div style="left:463.92px;top:33.7px;width:1px;height:660.0px;background:#444444"></div>
<div style="left:463.92px;top:18.500px;width:1px;height:15px;background:#6a6a6a"></div>
<div style="left:469.28px;top:26.500px;width:1px;height:7px;background:#5e5e5e"></div>
<div style="left:474.64px;top:26.500px;width:1px;height:7px;background:#5e5e5e"></div>
<div style="left:480.00px;top:26.500px;width:1px;height:7px;background:#5e5e5e"></div>
<div style="left:485.36px;top:33.7px;width:1px;height:660.0px;background:#444444"></div>
<div style="left:485.36px;top:18.500px;width:1px;height:15px;background:#6a6a6a"></div>
<div style="left:490.72px;top:26.500px;width:1px;height:7px;background:#5e5e5e"></div>
<div style="left:496.08px;top:26.500px;width:1px;height:7px;background:#5e5e5e"></div>
<div style="left:501.44px;top:26.500px;width:1px;height:7px;background:#5e5e5e"></div>
<div style="left:506.80px;top:33.7px;width:1px;height:660.0px;background:#4a4a4a"></div>
<div style="left:506.80px;top:1px;width:1px;height:33px;background:#8a8a8a"></div>
<div class="t" style="left:510.30px;top:3px;font-size:11.2px;color:#dcdcdc">53</div>
<div style="left:512.16px;top:26.500px;width:1px;height:7px;background:#5e5e5e"></div>
<div style="left:517.52px;top:26.500px;width:1px;height:7px;background:#5e5e5e"></div>
<div style="left:522.88px;top:26.500px;width:1px;height:7px;background:#5e5e5e"></div>
<div style="left:528.24px;top:33.7px;width:1px;height:660.0px;background:#444444"></div>
<div style="left:528.24px;top:18.500px;width:1px;height:15px;background:#6a6a6a"></div>
<div style="left:533.60px;top:26.500px;width:1px;height:7px;background:#5e5e5e"></div>
<div style="left:538.96px;top:26.500px;width:1px;height:7px;background:#5e5e5e"></div>
<div style="left:544.32px;top:26.500px;width:1px;height:7px;background:#5e5e5e"></div>
<div style="left:549.68px;top:33.7px;width:1px;height:660.0px;background:#444444"></div>
<div style="left:549.68px;top:18.500px;width:1px;height:15px;background:#6a6a6a"></div>
<div style="left:555.04px;top:26.500px;width:1px;height:7px;background:#5e5e5e"></div>
<div style="left:560.40px;top:26.500px;width:1px;height:7px;background:#5e5e5e"></div>
<div style="left:565.76px;top:26.500px;width:1px;height:7px;background:#5e5e5e"></div>
<div style="left:571.12px;top:33.7px;width:1px;height:660.0px;background:#444444"></div>
<div style="left:571.12px;top:18.500px;width:1px;height:15px;background:#6a6a6a"></div>
<div style="left:576.48px;top:26.500px;width:1px;height:7px;background:#5e5e5e"></div>
<div style="left:581.84px;top:26.500px;width:1px;height:7px;background:#5e5e5e"></div>
<div style="left:587.20px;top:26.500px;width:1px;height:7px;background:#5e5e5e"></div>
<div style="left:592.56px;top:33.7px;width:1px;height:660.0px;background:#4a4a4a"></div>
<div style="left:592.56px;top:1px;width:1px;height:33px;background:#8a8a8a"></div>
<div class="t" style="left:596.06px;top:3px;font-size:11.2px;color:#dcdcdc">57</div>
<div style="left:597.92px;top:26.500px;width:1px;height:7px;background:#5e5e5e"></div>
<div style="left:603.28px;top:26.500px;width:1px;height:7px;background:#5e5e5e"></div>
<div style="left:608.64px;top:26.500px;width:1px;height:7px;background:#5e5e5e"></div>
<div style="left:614.00px;top:33.7px;width:1px;height:660.0px;background:#444444"></div>
<div style="left:614.00px;top:18.500px;width:1px;height:15px;background:#6a6a6a"></div>
<div style="left:619.36px;top:26.500px;width:1px;height:7px;background:#5e5e5e"></div>
<div style="left:624.72px;top:26.500px;width:1px;height:7px;background:#5e5e5e"></div>
<div style="left:630.08px;top:26.500px;width:1px;height:7px;background:#5e5e5e"></div>
<div style="left:635.44px;top:33.7px;width:1px;height:660.0px;background:#444444"></div>
<div style="left:635.44px;top:18.500px;width:1px;height:15px;background:#6a6a6a"></div>
<div style="left:640.80px;top:26.500px;width:1px;height:7px;background:#5e5e5e"></div>
<div style="left:646.16px;top:26.500px;width:1px;height:7px;background:#5e5e5e"></div>
<div style="left:651.52px;top:26.500px;width:1px;height:7px;background:#5e5e5e"></div>
<div class="t" style="left:2.500px;top:21.500px;font-size:9.5px;color:#6c6c6c">Em</div>
<div class="t" style="left:-4.26px;top:3px;font-size:11.2px;color:#dcdcdc">29</div>
<div class="reg" style="left:-10.00px;top:34.40px;width:87.60px;height:26.1px;background:#d2a917">
<div class="rt" style="left:9.2px;font-size:9.35px;letter-spacing:0;-webkit-text-stroke:0;top:1.900px">研究科学</div>
<div style="left:2px;top:17.500px;width:83.6px;height:1.200px;background:repeating-linear-gradient(90deg,rgba(255,255,255,.42) 0 1.300px,transparent 1.300px 2.680px)"></div>
<div style="left:2px;top:21px;width:83.6px;height:1.200px;background:repeating-linear-gradient(90deg,rgba(255,255,255,.42) 0 1.300px,transparent 1.300px 2.680px)"></div>
<div style="left:10.0px;top:17px;width:1.500px;height:1.500px;background:rgba(255,255,255,.95)"></div>
<div style="left:31.4px;top:17px;width:1.500px;height:1.500px;background:rgba(255,255,255,.95)"></div>
<div style="left:52.8px;top:17px;width:1.500px;height:1.500px;background:rgba(255,255,255,.95)"></div>
<div style="left:74.2px;top:17px;width:1.500px;height:1.500px;background:rgba(255,255,255,.95)"></div>
<div style="left:31.0px;top:20.700px;width:1.500px;height:1.500px;background:rgba(255,255,255,.95)"></div>
<div style="left:73.8px;top:20.700px;width:1.500px;height:1.500px;background:rgba(255,255,255,.95)"></div>
</div>
<div class="reg" style="left:249.82px;top:34.40px;width:84.06px;height:26.1px;background:#d2a917">
<div class="rt" style="left:4.0px;font-size:9.35px;letter-spacing:0;-webkit-text-stroke:0;top:1.900px">研究科学</div>
<div style="left:2px;top:17.500px;width:80.1px;height:1.200px;background:repeating-linear-gradient(90deg,rgba(255,255,255,.42) 0 1.300px,transparent 1.300px 2.680px)"></div>
<div style="left:2px;top:21px;width:80.1px;height:1.200px;background:repeating-linear-gradient(90deg,rgba(255,255,255,.42) 0 1.300px,transparent 1.300px 2.680px)"></div>
<div style="left:10.0px;top:17px;width:1.500px;height:1.500px;background:rgba(255,255,255,.95)"></div>
<div style="left:31.4px;top:17px;width:1.500px;height:1.500px;background:rgba(255,255,255,.95)"></div>
<div style="left:52.8px;top:17px;width:1.500px;height:1.500px;background:rgba(255,255,255,.95)"></div>
<div style="left:74.2px;top:17px;width:1.500px;height:1.500px;background:rgba(255,255,255,.95)"></div>
<div style="left:31.0px;top:20.700px;width:1.500px;height:1.500px;background:rgba(255,255,255,.95)"></div>
<div style="left:73.8px;top:20.700px;width:1.500px;height:1.500px;background:rgba(255,255,255,.95)"></div>
</div>
<div class="reg" style="left:335.58px;top:34.40px;width:63.62px;height:26.1px;background:#d2a917">
<div class="rt" style="left:4.0px;font-size:9.35px;letter-spacing:0;-webkit-text-stroke:0;top:1.900px">研究科学</div>
<div style="left:2px;top:17.500px;width:59.6px;height:1.200px;background:repeating-linear-gradient(90deg,rgba(255,255,255,.42) 0 1.300px,transparent 1.300px 2.680px)"></div>
<div style="left:2px;top:21px;width:59.6px;height:1.200px;background:repeating-linear-gradient(90deg,rgba(255,255,255,.42) 0 1.300px,transparent 1.300px 2.680px)"></div>
<div style="left:10.0px;top:17px;width:1.500px;height:1.500px;background:rgba(255,255,255,.95)"></div>
<div style="left:31.4px;top:17px;width:1.500px;height:1.500px;background:rgba(255,255,255,.95)"></div>
<div style="left:52.8px;top:17px;width:1.500px;height:1.500px;background:rgba(255,255,255,.95)"></div>
<div style="left:31.0px;top:20.700px;width:1.500px;height:1.500px;background:rgba(255,255,255,.95)"></div>
</div>
<div class="reg" style="left:421.34px;top:34.40px;width:84.06px;height:26.1px;background:#d2a917">
<div class="rt" style="left:4.0px;font-size:9.35px;letter-spacing:0;-webkit-text-stroke:0;top:1.900px">研究科学</div>
<div style="left:2px;top:17.500px;width:80.1px;height:1.200px;background:repeating-linear-gradient(90deg,rgba(255,255,255,.42) 0 1.300px,transparent 1.300px 2.680px)"></div>
<div style="left:2px;top:21px;width:80.1px;height:1.200px;background:repeating-linear-gradient(90deg,rgba(255,255,255,.42) 0 1.300px,transparent 1.300px 2.680px)"></div>
<div style="left:10.0px;top:17px;width:1.500px;height:1.500px;background:rgba(255,255,255,.95)"></div>
<div style="left:31.4px;top:17px;width:1.500px;height:1.500px;background:rgba(255,255,255,.95)"></div>
<div style="left:52.8px;top:17px;width:1.500px;height:1.500px;background:rgba(255,255,255,.95)"></div>
<div style="left:74.2px;top:17px;width:1.500px;height:1.500px;background:rgba(255,255,255,.95)"></div>
<div style="left:31.0px;top:20.700px;width:1.500px;height:1.500px;background:rgba(255,255,255,.95)"></div>
<div style="left:73.8px;top:20.700px;width:1.500px;height:1.500px;background:rgba(255,255,255,.95)"></div>
</div>
<div class="reg" style="left:507.10px;top:34.40px;width:84.06px;height:26.1px;background:#d2a917">
<div class="rt" style="left:4.0px;font-size:9.35px;letter-spacing:0;-webkit-text-stroke:0;top:1.900px">研究科学</div>
<div style="left:2px;top:17.500px;width:80.1px;height:1.200px;background:repeating-linear-gradient(90deg,rgba(255,255,255,.42) 0 1.300px,transparent 1.300px 2.680px)"></div>
<div style="left:2px;top:21px;width:80.1px;height:1.200px;background:repeating-linear-gradient(90deg,rgba(255,255,255,.42) 0 1.300px,transparent 1.300px 2.680px)"></div>
<div style="left:10.0px;top:17px;width:1.500px;height:1.500px;background:rgba(255,255,255,.95)"></div>
<div style="left:31.4px;top:17px;width:1.500px;height:1.500px;background:rgba(255,255,255,.95)"></div>
<div style="left:52.8px;top:17px;width:1.500px;height:1.500px;background:rgba(255,255,255,.95)"></div>
<div style="left:74.2px;top:17px;width:1.500px;height:1.500px;background:rgba(255,255,255,.95)"></div>
<div style="left:31.0px;top:20.700px;width:1.500px;height:1.500px;background:rgba(255,255,255,.95)"></div>
<div style="left:73.8px;top:20.700px;width:1.500px;height:1.500px;background:rgba(255,255,255,.95)"></div>
</div>
<div class="reg" style="left:592.86px;top:34.40px;width:73.14px;height:26.1px;background:#d2a917">
<div class="rt" style="left:4.0px;font-size:9.35px;letter-spacing:0;-webkit-text-stroke:0;top:1.900px">研究科学</div>
<div style="left:2px;top:17.500px;width:69.1px;height:1.200px;background:repeating-linear-gradient(90deg,rgba(255,255,255,.42) 0 1.300px,transparent 1.300px 2.680px)"></div>
<div style="left:2px;top:21px;width:69.1px;height:1.200px;background:repeating-linear-gradient(90deg,rgba(255,255,255,.42) 0 1.300px,transparent 1.300px 2.680px)"></div>
<div style="left:10.0px;top:17px;width:1.500px;height:1.500px;background:rgba(255,255,255,.95)"></div>
<div style="left:31.4px;top:17px;width:1.500px;height:1.500px;background:rgba(255,255,255,.95)"></div>
<div style="left:52.8px;top:17px;width:1.500px;height:1.500px;background:rgba(255,255,255,.95)"></div>
<div style="left:31.0px;top:20.700px;width:1.500px;height:1.500px;background:rgba(255,255,255,.95)"></div>
</div>
<div class="reg" style="left:-10.00px;top:149.44px;width:87.60px;height:26.1px;background:#a4c618">
<div class="rt" style="left:9.2px;font-size:9.35px;letter-spacing:0;-webkit-text-stroke:0;top:1.900px">驰放人声序列</div>
<div style="left:2px;top:20px;width:83.6px;height:1.300px;background:repeating-linear-gradient(90deg,rgba(255,255,255,.6) 0 8px,transparent 8px 11px,rgba(255,255,255,.6) 11px 13px,transparent 13px 16px,rgba(255,255,255,.6) 16px 21.400px)"></div>
</div>
<div class="reg" style="left:249.82px;top:149.44px;width:84.06px;height:26.1px;background:#a4c618">
<div class="rt" style="left:4.0px;font-size:9.35px;letter-spacing:0;-webkit-text-stroke:0;top:1.900px">驰放人声序列</div>
<div style="left:2px;top:20px;width:80.1px;height:1.300px;background:repeating-linear-gradient(90deg,rgba(255,255,255,.6) 0 8px,transparent 8px 11px,rgba(255,255,255,.6) 11px 13px,transparent 13px 16px,rgba(255,255,255,.6) 16px 21.400px)"></div>
</div>
<div class="reg" style="left:335.58px;top:149.44px;width:63.62px;height:26.1px;background:#a4c618">
<div class="rt" style="left:4.0px;font-size:9.35px;letter-spacing:0;-webkit-text-stroke:0;top:1.900px">驰放人声序列</div>
<div style="left:2px;top:20px;width:59.6px;height:1.300px;background:repeating-linear-gradient(90deg,rgba(255,255,255,.6) 0 8px,transparent 8px 11px,rgba(255,255,255,.6) 11px 13px,transparent 13px 16px,rgba(255,255,255,.6) 16px 21.400px)"></div>
</div>
<div class="reg" style="left:421.34px;top:149.44px;width:84.06px;height:26.1px;background:#a4c618">
<div class="rt" style="left:4.0px;font-size:9.35px;letter-spacing:0;-webkit-text-stroke:0;top:1.900px">驰放人声序列</div>
<div style="left:2px;top:20px;width:80.1px;height:1.300px;background:repeating-linear-gradient(90deg,rgba(255,255,255,.6) 0 8px,transparent 8px 11px,rgba(255,255,255,.6) 11px 13px,transparent 13px 16px,rgba(255,255,255,.6) 16px 21.400px)"></div>
</div>
<div class="reg" style="left:507.10px;top:149.44px;width:84.06px;height:26.1px;background:#a4c618">
<div class="rt" style="left:4.0px;font-size:9.35px;letter-spacing:0;-webkit-text-stroke:0;top:1.900px">驰放人声序列</div>
<div style="left:2px;top:20px;width:80.1px;height:1.300px;background:repeating-linear-gradient(90deg,rgba(255,255,255,.6) 0 8px,transparent 8px 11px,rgba(255,255,255,.6) 11px 13px,transparent 13px 16px,rgba(255,255,255,.6) 16px 21.400px)"></div>
</div>
<div class="reg" style="left:592.86px;top:149.44px;width:73.14px;height:26.1px;background:#a4c618">
<div class="rt" style="left:4.0px;font-size:9.35px;letter-spacing:0;-webkit-text-stroke:0;top:1.900px">驰放人声序列</div>
<div style="left:2px;top:20px;width:69.1px;height:1.300px;background:repeating-linear-gradient(90deg,rgba(255,255,255,.6) 0 8px,transparent 8px 11px,rgba(255,255,255,.6) 11px 13px,transparent 13px 16px,rgba(255,255,255,.6) 16px 21.400px)"></div>
</div>
<div class="reg" style="left:-10.00px;top:206.96px;width:87.60px;height:26.1px;background:#78c51a">
<div class="rt" style="left:9.2px;font-size:9.35px;letter-spacing:0;-webkit-text-stroke:0;top:1.900px">弹拨尼龙弦吉他</div>
<div style="left:0;top:16.800px;width:87.6px;height:2.100px;background:repeating-linear-gradient(90deg,rgba(255,255,255,.74) 0 13px,rgba(255,255,255,.12) 13px 16px,rgba(255,255,255,.74) 16px 24px,rgba(255,255,255,.12) 24px 27px,rgba(255,255,255,.74) 27px 50px,rgba(255,255,255,.12) 50px 53px,rgba(255,255,255,.74) 53px 61px,rgba(255,255,255,.12) 61px 64.320px)"></div>
<div style="left:0;top:18.900px;width:87.6px;height:1.900px;background:repeating-linear-gradient(90deg,rgba(255,255,255,.74) 0 20px,rgba(255,255,255,.3) 20px 22px,rgba(255,255,255,.74) 22px 40px,rgba(255,255,255,.3) 40px 42.880px)"></div>
</div>
<div class="reg" style="left:249.82px;top:206.96px;width:84.06px;height:26.1px;background:#78c51a">
<div class="rt" style="left:4.0px;font-size:9.35px;letter-spacing:0;-webkit-text-stroke:0;top:1.900px">弹拨尼龙弦吉他</div>
<div style="left:0;top:16.800px;width:84.1px;height:2.100px;background:repeating-linear-gradient(90deg,rgba(255,255,255,.74) 0 13px,rgba(255,255,255,.12) 13px 16px,rgba(255,255,255,.74) 16px 24px,rgba(255,255,255,.12) 24px 27px,rgba(255,255,255,.74) 27px 50px,rgba(255,255,255,.12) 50px 53px,rgba(255,255,255,.74) 53px 61px,rgba(255,255,255,.12) 61px 64.320px)"></div>
<div style="left:0;top:18.900px;width:84.1px;height:1.900px;background:repeating-linear-gradient(90deg,rgba(255,255,255,.74) 0 20px,rgba(255,255,255,.3) 20px 22px,rgba(255,255,255,.74) 22px 40px,rgba(255,255,255,.3) 40px 42.880px)"></div>
</div>
<div class="reg" style="left:335.58px;top:206.96px;width:63.62px;height:26.1px;background:#78c51a">
<div class="rt" style="left:4.0px;font-size:9.35px;letter-spacing:0;-webkit-text-stroke:0;top:1.900px">弹拨尼龙弦吉他</div>
<div style="left:0;top:16.800px;width:63.6px;height:2.100px;background:repeating-linear-gradient(90deg,rgba(255,255,255,.74) 0 13px,rgba(255,255,255,.12) 13px 16px,rgba(255,255,255,.74) 16px 24px,rgba(255,255,255,.12) 24px 27px,rgba(255,255,255,.74) 27px 50px,rgba(255,255,255,.12) 50px 53px,rgba(255,255,255,.74) 53px 61px,rgba(255,255,255,.12) 61px 64.320px)"></div>
<div style="left:0;top:18.900px;width:63.6px;height:1.900px;background:repeating-linear-gradient(90deg,rgba(255,255,255,.74) 0 20px,rgba(255,255,255,.3) 20px 22px,rgba(255,255,255,.74) 22px 40px,rgba(255,255,255,.3) 40px 42.880px)"></div>
</div>
<div class="reg" style="left:421.34px;top:206.96px;width:84.06px;height:26.1px;background:#78c51a">
<div class="rt" style="left:4.0px;font-size:9.35px;letter-spacing:0;-webkit-text-stroke:0;top:1.900px">弹拨尼龙弦吉他</div>
<div style="left:0;top:16.800px;width:84.1px;height:2.100px;background:repeating-linear-gradient(90deg,rgba(255,255,255,.74) 0 13px,rgba(255,255,255,.12) 13px 16px,rgba(255,255,255,.74) 16px 24px,rgba(255,255,255,.12) 24px 27px,rgba(255,255,255,.74) 27px 50px,rgba(255,255,255,.12) 50px 53px,rgba(255,255,255,.74) 53px 61px,rgba(255,255,255,.12) 61px 64.320px)"></div>
<div style="left:0;top:18.900px;width:84.1px;height:1.900px;background:repeating-linear-gradient(90deg,rgba(255,255,255,.74) 0 20px,rgba(255,255,255,.3) 20px 22px,rgba(255,255,255,.74) 22px 40px,rgba(255,255,255,.3) 40px 42.880px)"></div>
</div>
<div class="reg" style="left:507.10px;top:206.96px;width:84.06px;height:26.1px;background:#78c51a">
<div class="rt" style="left:4.0px;font-size:9.35px;letter-spacing:0;-webkit-text-stroke:0;top:1.900px">弹拨尼龙弦吉他</div>
<div style="left:0;top:16.800px;width:84.1px;height:2.100px;background:repeating-linear-gradient(90deg,rgba(255,255,255,.74) 0 13px,rgba(255,255,255,.12) 13px 16px,rgba(255,255,255,.74) 16px 24px,rgba(255,255,255,.12) 24px 27px,rgba(255,255,255,.74) 27px 50px,rgba(255,255,255,.12) 50px 53px,rgba(255,255,255,.74) 53px 61px,rgba(255,255,255,.12) 61px 64.320px)"></div>
<div style="left:0;top:18.900px;width:84.1px;height:1.900px;background:repeating-linear-gradient(90deg,rgba(255,255,255,.74) 0 20px,rgba(255,255,255,.3) 20px 22px,rgba(255,255,255,.74) 22px 40px,rgba(255,255,255,.3) 40px 42.880px)"></div>
</div>
<div class="reg" style="left:592.86px;top:206.96px;width:73.14px;height:26.1px;background:#78c51a">
<div class="rt" style="left:4.0px;font-size:9.35px;letter-spacing:0;-webkit-text-stroke:0;top:1.900px">弹拨尼龙弦吉他</div>
<div style="left:0;top:16.800px;width:73.1px;height:2.100px;background:repeating-linear-gradient(90deg,rgba(255,255,255,.74) 0 13px,rgba(255,255,255,.12) 13px 16px,rgba(255,255,255,.74) 16px 24px,rgba(255,255,255,.12) 24px 27px,rgba(255,255,255,.74) 27px 50px,rgba(255,255,255,.12) 50px 53px,rgba(255,255,255,.74) 53px 61px,rgba(255,255,255,.12) 61px 64.320px)"></div>
<div style="left:0;top:18.900px;width:73.1px;height:1.900px;background:repeating-linear-gradient(90deg,rgba(255,255,255,.74) 0 20px,rgba(255,255,255,.3) 20px 22px,rgba(255,255,255,.74) 22px 40px,rgba(255,255,255,.3) 40px 42.880px)"></div>
</div>
<div class="reg" style="left:249.82px;top:120.68px;width:84.06px;height:26.1px;background:#cdcb16">
<div class="rt" style="left:4.0px;font-size:9.35px;letter-spacing:0;-webkit-text-stroke:0;top:1.900px">圆角方形贝司</div>
<div style="left:35.3px;top:20.500px;width:4px;height:1px;background:rgba(255,255,255,.7)"></div><div style="left:39.3px;top:19.500px;width:4px;height:1px;background:rgba(255,255,255,.7)"></div>
</div>
<div class="reg" style="left:335.58px;top:120.68px;width:63.62px;height:26.1px;background:#cdcb16">
<div class="rt" style="left:4.0px;font-size:9.35px;letter-spacing:0;-webkit-text-stroke:0;top:1.900px">圆角方形贝司</div>
<div style="left:26.7px;top:20.500px;width:4px;height:1px;background:rgba(255,255,255,.7)"></div><div style="left:30.7px;top:19.500px;width:4px;height:1px;background:rgba(255,255,255,.7)"></div>
</div>
<div class="reg" style="left:78.30px;top:178.20px;width:85.26px;height:26.1px;background:#7bc51c;border-radius:1.5px">
<div class="rt" style="left:4.0px;">Chill Vocal Seque</div>
<div style="left:2px;top:17.800px;width:81.3px;height:5px;background:repeating-linear-gradient(90deg,rgba(255,255,255,.38) 0 1px,transparent 1px 2.680px)"></div>
<div style="left:1px;top:20px;width:83.3px;height:1px;background:rgba(255,255,255,.6)"></div>
<div style="left:2px;top:19px;width:2.500px;height:2.500px;background:#fff;border-radius:50%"></div>
</div>
<div class="reg" style="left:164.06px;top:178.20px;width:85.06px;height:26.1px;background:#7bc51c;border-radius:1.5px">
<div class="rt" style="left:4.0px;">Chill Vocal Seque</div>
<div style="left:2px;top:17.800px;width:81.1px;height:5px;background:repeating-linear-gradient(90deg,rgba(255,255,255,.38) 0 1px,transparent 1px 2.680px)"></div>
<div style="left:1px;top:20px;width:83.1px;height:1px;background:rgba(255,255,255,.6)"></div>
<div style="left:2px;top:19px;width:2.500px;height:2.500px;background:#fff;border-radius:50%"></div>
</div>
<div class="reg" style="left:421.34px;top:235.72px;width:84.06px;height:26.1px;background:#66c41c">
<div class="rt" style="left:4.0px;">Plucked Nylon G</div>
<div style="left:0;top:16.800px;width:84.1px;height:2.100px;background:repeating-linear-gradient(90deg,rgba(255,255,255,.74) 0 13px,rgba(255,255,255,.12) 13px 16px,rgba(255,255,255,.74) 16px 24px,rgba(255,255,255,.12) 24px 27px,rgba(255,255,255,.74) 27px 50px,rgba(255,255,255,.12) 50px 53px,rgba(255,255,255,.74) 53px 61px,rgba(255,255,255,.12) 61px 64.320px)"></div>
<div style="left:0;top:18.900px;width:84.1px;height:1.900px;background:repeating-linear-gradient(90deg,rgba(255,255,255,.74) 0 20px,rgba(255,255,255,.3) 20px 22px,rgba(255,255,255,.74) 22px 40px,rgba(255,255,255,.3) 40px 42.880px)"></div>
</div>
<div class="reg" style="left:507.10px;top:235.72px;width:84.06px;height:26.1px;background:#66c41c">
<div class="rt" style="left:4.0px;">Plucked Nylon Gu</div>
<div style="left:0;top:16.800px;width:84.1px;height:2.100px;background:repeating-linear-gradient(90deg,rgba(255,255,255,.74) 0 13px,rgba(255,255,255,.12) 13px 16px,rgba(255,255,255,.74) 16px 24px,rgba(255,255,255,.12) 24px 27px,rgba(255,255,255,.74) 27px 50px,rgba(255,255,255,.12) 50px 53px,rgba(255,255,255,.74) 53px 61px,rgba(255,255,255,.12) 61px 64.320px)"></div>
<div style="left:0;top:18.900px;width:84.1px;height:1.900px;background:repeating-linear-gradient(90deg,rgba(255,255,255,.74) 0 20px,rgba(255,255,255,.3) 20px 22px,rgba(255,255,255,.74) 22px 40px,rgba(255,255,255,.3) 40px 42.880px)"></div>
</div>
<div class="reg" style="left:592.86px;top:235.72px;width:73.14px;height:26.1px;background:#66c41c">
<div class="rt" style="left:4.0px;">Plucked Nylon</div>
<div style="left:0;top:16.800px;width:73.1px;height:2.100px;background:repeating-linear-gradient(90deg,rgba(255,255,255,.74) 0 13px,rgba(255,255,255,.12) 13px 16px,rgba(255,255,255,.74) 16px 24px,rgba(255,255,255,.12) 24px 27px,rgba(255,255,255,.74) 27px 50px,rgba(255,255,255,.12) 50px 53px,rgba(255,255,255,.74) 53px 61px,rgba(255,255,255,.12) 61px 64.320px)"></div>
<div style="left:0;top:18.900px;width:73.1px;height:1.900px;background:repeating-linear-gradient(90deg,rgba(255,255,255,.74) 0 20px,rgba(255,255,255,.3) 20px 22px,rgba(255,255,255,.74) 22px 40px,rgba(255,255,255,.3) 40px 42.880px)"></div>
</div>
<div class="reg" style="left:421.34px;top:264.48px;width:41.18px;height:26.1px;background:#54c21e">
<div class="rt" style="left:4.0px;font-size:9.35px;letter-spacing:0;-webkit-text-stroke:0;top:1.900px">70 年代模拟主音</div>
<div style="left:1px;top:19.700px;width:20.6px;height:1px;background:rgba(255,255,255,.6)"></div>
<div style="left:21.6px;top:17.900px;width:18.6px;height:1px;background:rgba(255,255,255,.6)"></div><div style="left:17.6px;top:18.300px;width:6px;height:2px;background:rgba(255,255,255,.6)"></div>
</div>
<div class="reg" style="left:421.34px;top:293.24px;width:41.18px;height:26.1px;background:#2cbf2a">
<div class="rt" style="left:4.0px;">70s Ana</div>
<div style="left:1px;top:19.700px;width:20.6px;height:1px;background:rgba(255,255,255,.6)"></div>
<div style="left:21.6px;top:17.900px;width:18.6px;height:1px;background:rgba(255,255,255,.6)"></div><div style="left:17.6px;top:18.300px;width:6px;height:2px;background:rgba(255,255,255,.6)"></div>
</div>
<div class="reg" style="left:464.22px;top:264.48px;width:41.18px;height:26.1px;background:#54c21e">
<div class="rt" style="left:4.0px;font-size:9.35px;letter-spacing:0;-webkit-text-stroke:0;top:1.900px">70 年代模拟主音</div>
<div style="left:1px;top:19.700px;width:20.6px;height:1px;background:rgba(255,255,255,.6)"></div>
<div style="left:21.6px;top:17.900px;width:18.6px;height:1px;background:rgba(255,255,255,.6)"></div><div style="left:17.6px;top:18.300px;width:6px;height:2px;background:rgba(255,255,255,.6)"></div>
</div>
<div class="reg" style="left:464.22px;top:293.24px;width:41.18px;height:26.1px;background:#2cbf2a">
<div class="rt" style="left:4.0px;">70s Ana</div>
<div style="left:1px;top:19.700px;width:20.6px;height:1px;background:rgba(255,255,255,.6)"></div>
<div style="left:21.6px;top:17.900px;width:18.6px;height:1px;background:rgba(255,255,255,.6)"></div><div style="left:17.6px;top:18.300px;width:6px;height:2px;background:rgba(255,255,255,.6)"></div>
</div>
<div class="reg" style="left:507.10px;top:264.48px;width:41.18px;height:26.1px;background:#54c21e">
<div class="rt" style="left:4.0px;font-size:9.35px;letter-spacing:0;-webkit-text-stroke:0;top:1.900px">70 年代模拟主音</div>
<div style="left:1px;top:19.700px;width:20.6px;height:1px;background:rgba(255,255,255,.6)"></div>
<div style="left:21.6px;top:17.900px;width:18.6px;height:1px;background:rgba(255,255,255,.6)"></div><div style="left:17.6px;top:18.300px;width:6px;height:2px;background:rgba(255,255,255,.6)"></div>
</div>
<div class="reg" style="left:507.10px;top:293.24px;width:41.18px;height:26.1px;background:#2cbf2a">
<div class="rt" style="left:4.0px;">70s Ana</div>
<div style="left:1px;top:19.700px;width:20.6px;height:1px;background:rgba(255,255,255,.6)"></div>
<div style="left:21.6px;top:17.900px;width:18.6px;height:1px;background:rgba(255,255,255,.6)"></div><div style="left:17.6px;top:18.300px;width:6px;height:2px;background:rgba(255,255,255,.6)"></div>
</div>
<div class="reg" style="left:549.98px;top:264.48px;width:41.18px;height:26.1px;background:#54c21e">
<div class="rt" style="left:4.0px;font-size:9.35px;letter-spacing:0;-webkit-text-stroke:0;top:1.900px">70 年代模拟主音</div>
<div style="left:1px;top:19.700px;width:20.6px;height:1px;background:rgba(255,255,255,.6)"></div>
<div style="left:21.6px;top:17.900px;width:18.6px;height:1px;background:rgba(255,255,255,.6)"></div><div style="left:17.6px;top:18.300px;width:6px;height:2px;background:rgba(255,255,255,.6)"></div>
</div>
<div class="reg" style="left:549.98px;top:293.24px;width:41.18px;height:26.1px;background:#2cbf2a">
<div class="rt" style="left:4.0px;">70s Ana</div>
<div style="left:1px;top:19.700px;width:20.6px;height:1px;background:rgba(255,255,255,.6)"></div>
<div style="left:21.6px;top:17.900px;width:18.6px;height:1px;background:rgba(255,255,255,.6)"></div><div style="left:17.6px;top:18.300px;width:6px;height:2px;background:rgba(255,255,255,.6)"></div>
</div>
<div class="reg" style="left:592.86px;top:264.48px;width:41.18px;height:26.1px;background:#54c21e">
<div class="rt" style="left:4.0px;font-size:9.35px;letter-spacing:0;-webkit-text-stroke:0;top:1.900px">70 年代模拟主音</div>
<div style="left:1px;top:19.700px;width:20.6px;height:1px;background:rgba(255,255,255,.6)"></div>
<div style="left:21.6px;top:17.900px;width:18.6px;height:1px;background:rgba(255,255,255,.6)"></div><div style="left:17.6px;top:18.300px;width:6px;height:2px;background:rgba(255,255,255,.6)"></div>
</div>
<div class="reg" style="left:592.86px;top:293.24px;width:41.18px;height:26.1px;background:#2cbf2a">
<div class="rt" style="left:4.0px;">70s Ana</div>
<div style="left:1px;top:19.700px;width:20.6px;height:1px;background:rgba(255,255,255,.6)"></div>
<div style="left:21.6px;top:17.900px;width:18.6px;height:1px;background:rgba(255,255,255,.6)"></div><div style="left:17.6px;top:18.300px;width:6px;height:2px;background:rgba(255,255,255,.6)"></div>
</div>
<div class="reg" style="left:635.74px;top:264.48px;width:30.26px;height:26.1px;background:#54c21e">
<div class="rt" style="left:4.0px;font-size:9.35px;letter-spacing:0;-webkit-text-stroke:0;top:1.900px">70 年代模拟主音</div>
<div style="left:1px;top:19.700px;width:15.1px;height:1px;background:rgba(255,255,255,.6)"></div>
<div style="left:16.1px;top:17.900px;width:13.1px;height:1px;background:rgba(255,255,255,.6)"></div><div style="left:12.1px;top:18.300px;width:6px;height:2px;background:rgba(255,255,255,.6)"></div>
</div>
<div class="reg" style="left:635.74px;top:293.24px;width:30.26px;height:26.1px;background:#2cbf2a">
<div class="rt" style="left:4.0px;">70s</div>
<div style="left:1px;top:19.700px;width:15.1px;height:1px;background:rgba(255,255,255,.6)"></div>
<div style="left:16.1px;top:17.900px;width:13.1px;height:1px;background:rgba(255,255,255,.6)"></div><div style="left:12.1px;top:18.300px;width:6px;height:2px;background:rgba(255,255,255,.6)"></div>
</div>
<div class="reg" style="left:249.82px;top:322.00px;width:169.82px;height:26.1px;background:#18c132">
<div class="rt" style="left:4.0px;">Square Blip Lead</div>
<div style="left:0;top:19.800px;width:169.8px;height:1px;background:rgba(255,255,255,.72)"></div>
<svg style="left:87px;top:3.800px" width="14" height="9" viewBox="0 0 14 9"><circle cx="4.400" cy="4.500" r="3.500" fill="none" stroke="#fff" stroke-width="0.900"/><circle cx="9.200" cy="4.500" r="3.500" fill="none" stroke="#fff" stroke-width="0.900"/></svg>
</div>
<div class="reg" style="left:421.34px;top:322.00px;width:169.82px;height:26.1px;background:#18c132">
<div class="rt" style="left:4.0px;">Square Blip Lead</div>
<div style="left:0;top:19.800px;width:169.8px;height:1px;background:rgba(255,255,255,.72)"></div>
<svg style="left:87px;top:3.800px" width="14" height="9" viewBox="0 0 14 9"><circle cx="4.400" cy="4.500" r="3.500" fill="none" stroke="#fff" stroke-width="0.900"/><circle cx="9.200" cy="4.500" r="3.500" fill="none" stroke="#fff" stroke-width="0.900"/></svg>
</div>
<div class="reg" style="left:592.86px;top:322.00px;width:73.14px;height:26.1px;background:#18c132">
<div class="rt" style="left:4.0px;">Square Blip Lead</div>
<div style="left:0;top:19.800px;width:73.1px;height:1px;background:rgba(255,255,255,.72)"></div>
</div>
<div class="reg" style="left:592.86px;top:350.76px;width:73.14px;height:26.1px;background:linear-gradient(#18c248,#1cc070)">
<div class="rt" style="left:4.0px;">Square Blip Lead Top</div>
<div style="left:0;top:19.800px;width:73.1px;height:1px;background:rgba(255,255,255,.72)"></div>
</div>
<div class="reg" style="left:421.34px;top:379.52px;width:20.74px;height:26.1px;background:#1cc064">
<div class="rt" style="left:4.0px;">Cut</div>
<div style="left:0;top:19.800px;width:20.7px;height:1px;background:rgba(255,255,255,.72)"></div>
</div>
<div class="reg" style="left:421.34px;top:408.28px;width:20.74px;height:26.1px;background:linear-gradient(#1cc070,#1ec090)">
<div class="rt" style="left:4.0px;">Cut</div>
<div style="left:0;top:19.800px;width:20.7px;height:1px;background:rgba(255,255,255,.72)"></div>
</div>
<div class="reg" style="left:464.22px;top:379.52px;width:20.74px;height:26.1px;background:#1cc064">
<div class="rt" style="left:4.0px;">Cut</div>
<div style="left:0;top:19.800px;width:20.7px;height:1px;background:rgba(255,255,255,.72)"></div>
</div>
<div class="reg" style="left:464.22px;top:408.28px;width:20.74px;height:26.1px;background:linear-gradient(#1cc070,#1ec090)">
<div class="rt" style="left:4.0px;">Cut</div>
<div style="left:0;top:19.800px;width:20.7px;height:1px;background:rgba(255,255,255,.72)"></div>
</div>
<div class="reg" style="left:507.10px;top:379.52px;width:20.74px;height:26.1px;background:#1cc064">
<div class="rt" style="left:4.0px;">Cut</div>
<div style="left:0;top:19.800px;width:20.7px;height:1px;background:rgba(255,255,255,.72)"></div>
</div>
<div class="reg" style="left:507.10px;top:408.28px;width:20.74px;height:26.1px;background:linear-gradient(#1cc070,#1ec090)">
<div class="rt" style="left:4.0px;">Cut</div>
<div style="left:0;top:19.800px;width:20.7px;height:1px;background:rgba(255,255,255,.72)"></div>
</div>
<div class="reg" style="left:549.98px;top:379.52px;width:19.74px;height:26.1px;background:#1cc064">
<div class="rt" style="left:4.0px;">Cu</div>
<div style="left:0;top:19.800px;width:19.7px;height:1px;background:rgba(255,255,255,.72)"></div>
</div>
<div class="reg" style="left:549.98px;top:408.28px;width:19.74px;height:26.1px;background:linear-gradient(#1cc070,#1ec090)">
<div class="rt" style="left:4.0px;">Cu</div>
<div style="left:0;top:19.800px;width:19.7px;height:1px;background:rgba(255,255,255,.72)"></div>
</div>
<div class="reg" style="left:592.86px;top:379.52px;width:19.74px;height:26.1px;background:#1cc064">
<div class="rt" style="left:4.0px;">Cu</div>
<div style="left:0;top:19.800px;width:19.7px;height:1px;background:rgba(255,255,255,.72)"></div>
</div>
<div class="reg" style="left:592.86px;top:408.28px;width:19.74px;height:26.1px;background:linear-gradient(#1cc070,#1ec090)">
<div class="rt" style="left:4.0px;">Cu</div>
<div style="left:0;top:19.800px;width:19.7px;height:1px;background:rgba(255,255,255,.72)"></div>
</div>
<div class="reg" style="left:635.74px;top:379.52px;width:19.74px;height:26.1px;background:#1cc064">
<div class="rt" style="left:4.0px;">Cu</div>
<div style="left:0;top:19.800px;width:19.7px;height:1px;background:rgba(255,255,255,.72)"></div>
</div>
<div class="reg" style="left:635.74px;top:408.28px;width:19.74px;height:26.1px;background:linear-gradient(#1cc070,#1ec090)">
<div class="rt" style="left:4.0px;">Cu</div>
<div style="left:0;top:19.800px;width:19.7px;height:1px;background:rgba(255,255,255,.72)"></div>
</div>
<div class="reg" style="left:249.82px;top:465.80px;width:149.38px;height:26.1px;background:#12c59c">
<div class="rt" style="left:4.0px;font-size:9.35px;letter-spacing:0;-webkit-text-stroke:0;top:1.900px">施坦威大钢琴</div>
<div style="left:1px;top:17.800px;width:141.4px;height:1px;background:repeating-linear-gradient(90deg,rgba(255,255,255,.8) 0 3px,transparent 3px 10.720px)"></div>
</div>
<div class="reg" style="left:421.34px;top:465.80px;width:244.66px;height:26.1px;background:#12c59c">
<div class="rt" style="left:4.0px;font-size:9.35px;letter-spacing:0;-webkit-text-stroke:0;top:1.900px">施坦威大钢琴</div>
<div style="left:1px;top:17.800px;width:236.7px;height:1px;background:repeating-linear-gradient(90deg,rgba(255,255,255,.8) 0 3px,transparent 3px 10.720px)"></div>
</div>
<div class="reg" style="left:-10.00px;top:494.56px;width:87.60px;height:26.1px;background:#14c6c8">
<div class="rt" style="left:9.2px;font-size:9.35px;letter-spacing:0;-webkit-text-stroke:0;top:1.900px">低频 - 抽象思考</div>
<div style="left:10px;top:19.500px;width:14px;height:1px;background:rgba(255,255,255,.7)"></div><div style="left:14px;top:18.500px;width:6px;height:1px;background:rgba(255,255,255,.7)"></div><div style="left:27px;top:20px;width:5px;height:1px;background:rgba(255,255,255,.7)"></div><div style="left:34px;top:20px;width:9px;height:1px;background:rgba(255,255,255,.7)"></div><div style="left:40px;top:20.800px;width:4px;height:1px;background:rgba(255,255,255,.7)"></div><div style="left:52px;top:21px;width:5px;height:1px;background:rgba(255,255,255,.6)"></div><div style="left:63px;top:21px;width:4px;height:1px;background:rgba(255,255,255,.6)"></div><div style="left:69px;top:19.500px;width:5px;height:1px;background:rgba(255,255,255,.7)"></div><div style="left:72px;top:18.500px;width:6px;height:1.500px;background:rgba(255,255,255,.8)"></div>
</div>
<div class="reg" style="left:78.30px;top:523.32px;width:170.82px;height:26.1px;background:#14c6c8">
<div class="rt" style="left:4.0px;">Canyon Chop Lead</div>
<div style="left:0;top:19.800px;width:170.8px;height:1px;background:rgba(255,255,255,.72)"></div>
</div>
<div class="reg" style="left:78.30px;top:552.08px;width:170.82px;height:26.1px;background:#1c84a4">
<div class="rt" style="left:4.0px;font-size:9.35px;letter-spacing:0;-webkit-text-stroke:0;top:1.900px">铃铛</div>
<div style="left:3px;top:20px;width:164.8px;height:1px;background:repeating-linear-gradient(90deg,transparent 0 3px,rgba(255,255,255,.7) 3px 6px,transparent 6px 8px,rgba(255,255,255,.7) 8px 10px,transparent 10px 21.400px)"></div>
<div style="left:3px;top:18.500px;width:164.8px;height:1px;background:repeating-linear-gradient(90deg,transparent 0 24px,rgba(255,255,255,.7) 24px 27px,transparent 27px 29px,rgba(255,255,255,.7) 29px 32px,transparent 32px 42.800px)"></div>
</div>
<div class="reg" style="left:78.30px;top:580.84px;width:170.82px;height:26.1px;background:#1c84a4">
<div class="rt" style="left:4.0px;font-size:9.35px;letter-spacing:0;-webkit-text-stroke:0;top:1.900px">波形运动贝司</div>
<div style="left:1px;top:19.700px;width:85.4px;height:1px;background:rgba(255,255,255,.6)"></div>
<div style="left:86.4px;top:17.900px;width:83.4px;height:1px;background:rgba(255,255,255,.6)"></div><div style="left:82.4px;top:18.300px;width:6px;height:2px;background:rgba(255,255,255,.6)"></div>
</div>
<div class="reg" style="left:592.86px;top:609.60px;width:73.14px;height:26.1px;background:#2a7aa8">
<div class="rt" style="left:4.0px;">Manzana FX</div>
<div style="left:0;top:20.500px;width:73.1px;height:1px;background:rgba(255,255,255,.6)"></div>
<div style="left:6px;top:18.500px;width:63.1px;height:2px;background:repeating-linear-gradient(90deg,rgba(255,255,255,.5) 0 1px,transparent 1px 3px,rgba(255,255,255,.5) 3px 4px,transparent 4px 13px)"></div>
</div>
<div style="left:0;top:692.8px;width:656px;height:13px;background:#393939"></div>
<div style="left:165.0px;top:695.5px;width:172px;height:6.500px;border-radius:3.500px;background:#777"></div>
<div style="left:79.70px;top:18px;width:1.200px;height:673.0px;background:#b8b8b8"></div>
<svg style="left:72.80px;top:17.500px" width="15" height="16" viewBox="0 0 15 16"><path d="M2 0h11a2 2 0 0 1 2 2v6.500L7.500 16 0 8.500V2a2 2 0 0 1 2-2z" fill="#c4c4c4" fill-opacity=".92"/><path d="M7.500 1v15" stroke="#f4f4f4" stroke-width="1"/></svg>
</div>
<div style="left:1291px;top:108.0px;width:12px;height:704.0px;background:#3a3a3a"></div>
<div style="left:1293.500px;top:144.0px;width:7px;height:372px;border-radius:3.500px;background:#6e6e6e"></div>
<div style="left:635px;top:107.8px;width:668px;height:1px;background:#2c2c2c"></div>
</div>
</body></html>
